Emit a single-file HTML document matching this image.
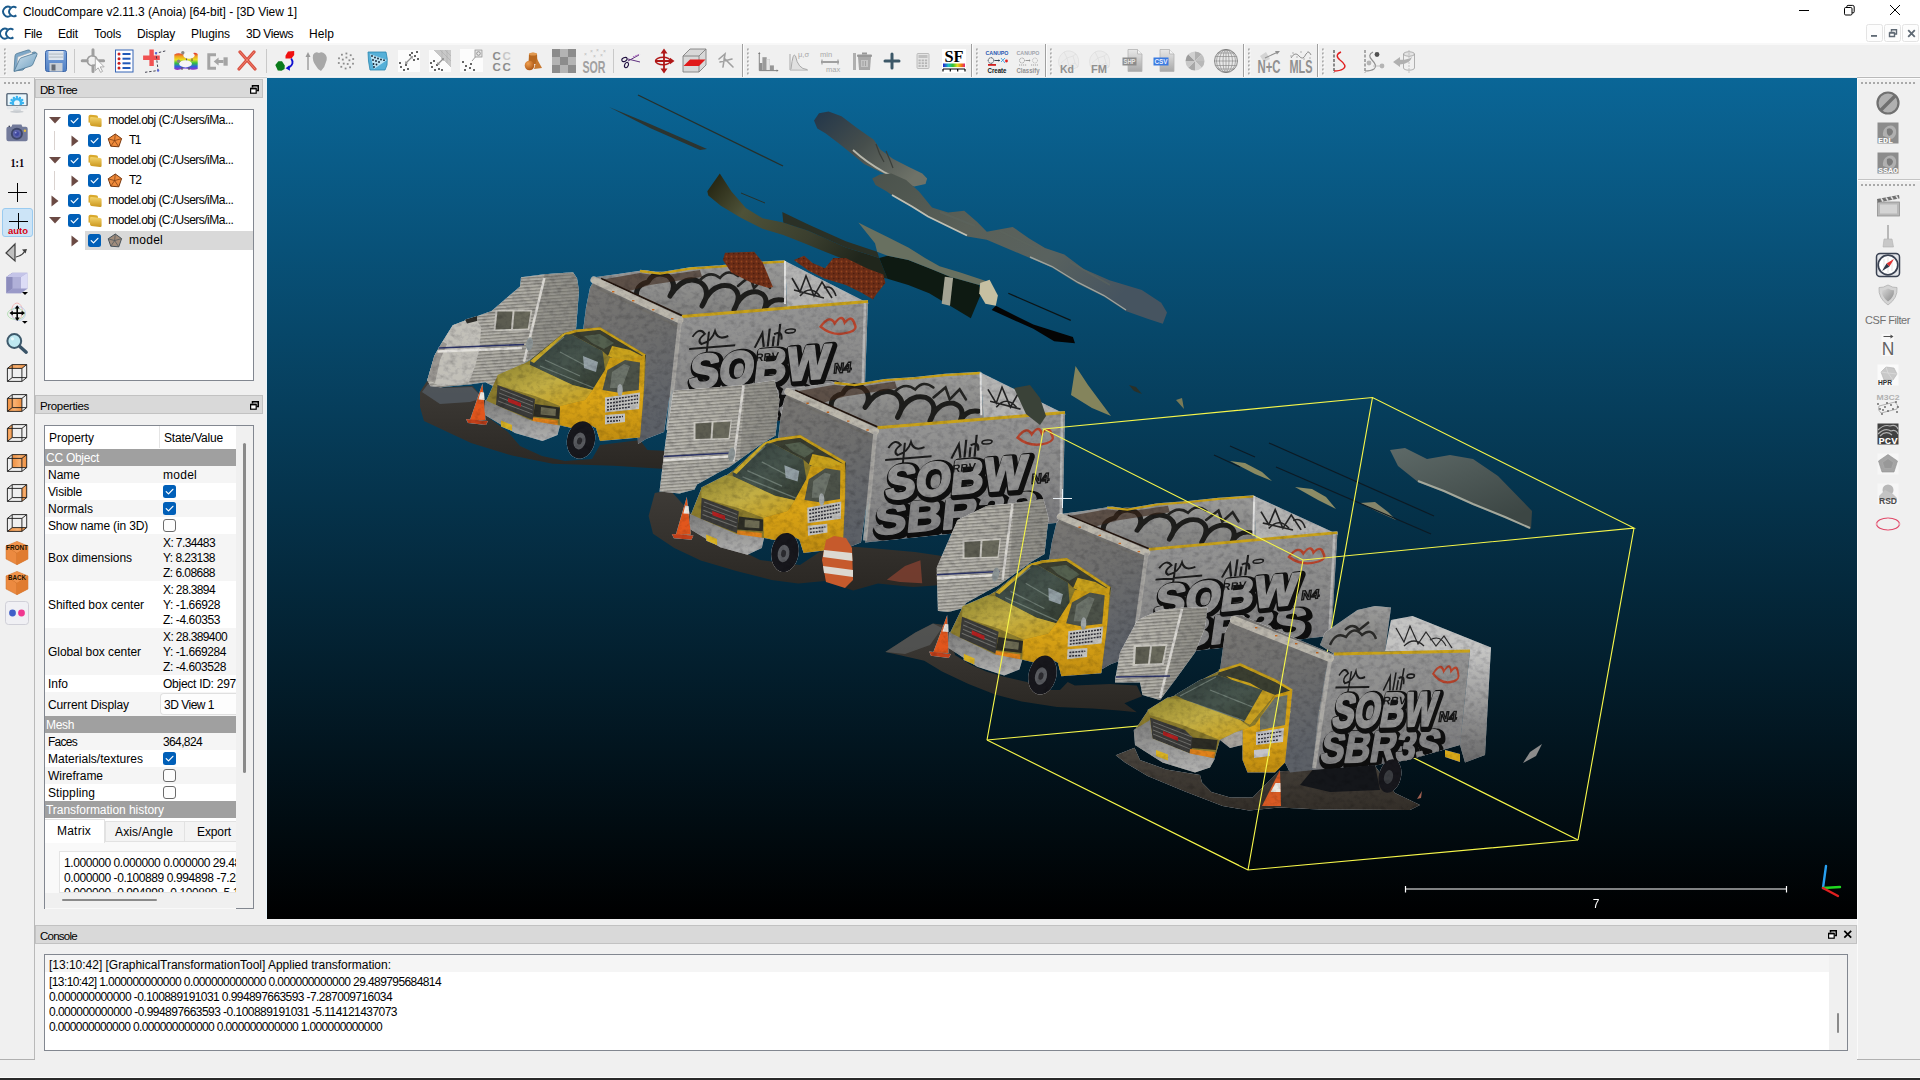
<!DOCTYPE html>
<html><head><meta charset="utf-8"><title>CloudCompare</title>
<style>
*{box-sizing:border-box;margin:0;padding:0}
html,body{width:1920px;height:1080px;overflow:hidden;background:#f0f0f0;font-family:"Liberation Sans",sans-serif;font-size:12px;color:#000}
.a{position:absolute}
.t{position:absolute;white-space:pre;line-height:1.16}
svg{position:absolute;overflow:visible}

</style></head>
<body>
<div class="a" style="left:0px;top:0px;width:1920px;height:44px;background:#fff;"></div>
<div class="a" style="left:0px;top:43px;width:1920px;height:2px;background:#f8f8f8;"></div>
<svg style="left:3px;top:4px" width="15" height="15" viewBox="0 0 15 15"><path d="M7.6 3.4 A4.9 4.9 0 1 0 7.6 11.8" fill="none" stroke="#1a5a8c" stroke-width="1.9"/><path d="M13.4 3.8 A4.6 4.6 0 1 0 13.4 11.4" fill="none" stroke="#1a5a8c" stroke-width="1.9"/></svg>
<div class="t" style="left:23px;top:5.8px;font-size:12px;color:#000;font-weight:normal;letter-spacing:-0.046px;">CloudCompare v2.11.3 (Anoia) [64-bit] - [3D View 1]</div>
<svg style="left:0px;top:26px" width="15" height="15" viewBox="0 0 15 15"><path d="M7.6 3.4 A4.9 4.9 0 1 0 7.6 11.8" fill="none" stroke="#1a5a8c" stroke-width="1.9"/><path d="M13.4 3.8 A4.6 4.6 0 1 0 13.4 11.4" fill="none" stroke="#1a5a8c" stroke-width="1.9"/></svg>
<div class="t" style="left:24px;top:28.3px;font-size:12px;color:#000;font-weight:normal;letter-spacing:-0.336px;">File</div>
<div class="t" style="left:58px;top:28.3px;font-size:12px;color:#000;font-weight:normal;letter-spacing:-0.172px;">Edit</div>
<div class="t" style="left:94px;top:28.3px;font-size:12px;color:#000;font-weight:normal;letter-spacing:-0.203px;">Tools</div>
<div class="t" style="left:137px;top:28.3px;font-size:12px;color:#000;font-weight:normal;letter-spacing:-0.194px;">Display</div>
<div class="t" style="left:191px;top:28.3px;font-size:12px;color:#000;font-weight:normal;letter-spacing:-0.051px;">Plugins</div>
<div class="t" style="left:246px;top:28.3px;font-size:12px;color:#000;font-weight:normal;letter-spacing:-0.434px;">3D Views</div>
<div class="t" style="left:309px;top:28.3px;font-size:12px;color:#000;font-weight:normal;letter-spacing:0.078px;">Help</div>
<svg style="left:1780px;top:0" width="140" height="44" viewBox="0 0 140 44"><path d="M19 10.5 H29" stroke="#000" stroke-width="1"/><rect x="64.5" y="7.5" width="7.5" height="7.5" rx="1.2" fill="none" stroke="#000" stroke-width="1"/><path d="M66.8 7.5 V6.7 A1.3 1.3 0 0 1 68.1 5.4 H72.6 A1.6 1.6 0 0 1 74.2 7 V11.7 A1.2 1.2 0 0 1 73 12.9 H72" fill="none" stroke="#000" stroke-width="1"/><path d="M110 5 L120 15 M120 5 L110 15" stroke="#000" stroke-width="1"/><rect x="86.5" y="24.5" width="16" height="17" rx="2" fill="#fdfdfd" stroke="#e4e4e4"/><rect x="104.5" y="24.5" width="16" height="17" rx="2" fill="#fdfdfd" stroke="#e4e4e4"/><rect x="122.5" y="24.5" width="16" height="17" rx="2" fill="#fdfdfd" stroke="#e4e4e4"/><rect x="91" y="35" width="6" height="1.8" fill="#5f6974"/><path d="M109.5 33 H114.5 V36.5 H109.5 Z M109.5 32.5 H114.5 M111.5 31.5 V29.8 H116.5 V34 H115" fill="none" stroke="#5f6974" stroke-width="1.4"/><path d="M128.2 30.2 L134.8 36.8 M134.8 30.2 L128.2 36.8" stroke="#5f6974" stroke-width="1.8"/></svg>
<div class="a" style="left:0px;top:76px;width:1920px;height:1px;background:#f5f5f5;"></div>
<div class="a" style="left:0px;top:77px;width:267px;height:1px;background:#d0d0d0;"></div>
<div class="a" style="left:267px;top:77px;width:1590px;height:1px;background:#e4eaee;"></div>
<div class="a" style="left:1857px;top:77px;width:63px;height:1px;background:#b9b9b9;"></div>
<div class="a" style="left:1858px;top:78px;width:62px;height:1px;background:#fcfcfc;"></div>
<svg style="left:0;top:44px" width="1920" height="34" viewBox="0 0 1920 34"><defs><linearGradient id="gfold" x1="0" y1="0" x2="1" y2="1"><stop offset="0" stop-color="#cfe2ef"/><stop offset="1" stop-color="#6f9fc0"/></linearGradient><linearGradient id="gsave" x1="0" y1="0" x2="0" y2="1"><stop offset="0" stop-color="#7fa6dc"/><stop offset="1" stop-color="#4f7fc4"/></linearGradient><linearGradient id="grain" x1="0" y1="0" x2="0" y2="1"><stop offset="0" stop-color="#e03030"/><stop offset="0.2" stop-color="#f0a020"/><stop offset="0.4" stop-color="#e8e020"/><stop offset="0.6" stop-color="#30c040"/><stop offset="0.8" stop-color="#3060e0"/><stop offset="1" stop-color="#a030c0"/></linearGradient><linearGradient id="gsf" x1="0" y1="0" x2="1" y2="0"><stop offset="0" stop-color="#2020d0"/><stop offset="0.25" stop-color="#20c0c0"/><stop offset="0.45" stop-color="#30c030"/><stop offset="0.65" stop-color="#e0e020"/><stop offset="0.85" stop-color="#f07010"/><stop offset="1" stop-color="#e02080"/></linearGradient><radialGradient id="gor" cx="0.35" cy="0.3" r="0.8"><stop offset="0" stop-color="#f0a050"/><stop offset="1" stop-color="#a85010"/></radialGradient><linearGradient id="ggrey" x1="0" y1="0" x2="0" y2="1"><stop offset="0" stop-color="#e8e8e8"/><stop offset="1" stop-color="#a8a8a8"/></linearGradient></defs><rect x="4" y="4.5" width="2" height="2" fill="#a9a9a9"/><rect x="5" y="5.5" width="2" height="2" fill="#fafafa" opacity="0.7"/><rect x="4" y="8.5" width="2" height="2" fill="#a9a9a9"/><rect x="5" y="9.5" width="2" height="2" fill="#fafafa" opacity="0.7"/><rect x="4" y="12.5" width="2" height="2" fill="#a9a9a9"/><rect x="5" y="13.5" width="2" height="2" fill="#fafafa" opacity="0.7"/><rect x="4" y="16.5" width="2" height="2" fill="#a9a9a9"/><rect x="5" y="17.5" width="2" height="2" fill="#fafafa" opacity="0.7"/><rect x="4" y="20.5" width="2" height="2" fill="#a9a9a9"/><rect x="5" y="21.5" width="2" height="2" fill="#fafafa" opacity="0.7"/><rect x="4" y="24.5" width="2" height="2" fill="#a9a9a9"/><rect x="5" y="25.5" width="2" height="2" fill="#fafafa" opacity="0.7"/><rect x="4" y="28.5" width="2" height="2" fill="#a9a9a9"/><rect x="5" y="29.5" width="2" height="2" fill="#fafafa" opacity="0.7"/><g transform="translate(25 17)"><path d="M-11 10 L-10 -5 Q-10 -7 -8 -7.5 L3 -11 Q5 -11.5 5.5 -9.5 L6 -8 L9 -9 Q11 -9.5 11 -7.5 L11 -4 L-2 9 Z" fill="#7fa8c8" stroke="#4f7896" stroke-width="0.8"/><path d="M-8 6 L-7 -4 L7 -9 L7 -3 Z" fill="#f4f4f4" stroke="#b8b8b8" stroke-width="0.5"/><path d="M-11 10.5 L-5.5 -1.5 Q-5 -3 -3 -3.5 L10.5 -8 Q12.5 -8.5 12 -6.5 L8 3 Q7.5 4.5 6 5 Z" fill="url(#gfold)" stroke="#4f7896" stroke-width="0.8"/></g><g transform="translate(56 17)"><rect x="-10.5" y="-10.5" width="21" height="21" rx="2" fill="url(#gsave)" stroke="#3c66a8" stroke-width="1"/><rect x="-7.5" y="-10" width="15" height="9" fill="#dfe6ee"/><rect x="-7.5" y="-7.5" width="15" height="1.2" fill="#b8c0c8"/><rect x="-7.5" y="-4.5" width="15" height="1.2" fill="#b8c0c8"/><rect x="-6.5" y="2" width="13" height="8.5" fill="#c9cfd6"/><rect x="-4.5" y="3.5" width="4" height="6" fill="#666c74"/></g><rect x="74" y="5" width="1" height="24" fill="#c9c9c9"/><g transform="translate(93 17)"><circle cx="-0.7" cy="-0.3" r="5" fill="none" stroke="#9c9c9c" stroke-width="1.6"/><path d="M0 -11.3 V-5.8 M0 4.8 V10.6 M-10.8 -0.3 H-5.8 M4.6 -0.3 H10.6" stroke="#9e9e9e" stroke-width="3" stroke-linecap="round"/><path d="M2.3 -3.2 L2.3 9.6 L5.2 6.8 L7.6 11.4 L9.6 10.4 L7.2 5.9 L11.2 5.9 Z" fill="#fbfbfb" stroke="#a6a6a6" stroke-width="0.9"/></g><g transform="translate(124 17)"><rect x="-8.5" y="-11" width="17.5" height="22" fill="#fdfdff" stroke="#3565b5" stroke-width="1"/><circle cx="-5" cy="-7" r="1.5" fill="#c82020"/><rect x="-1.5" y="-8" width="8" height="2" fill="#2058b8"/><circle cx="-5" cy="-2.3" r="1.5" fill="#c82020"/><rect x="-1.5" y="-3.3" width="8" height="2" fill="#2058b8"/><circle cx="-5" cy="2.3" r="1.5" fill="#c82020"/><rect x="-1.5" y="1.2999999999999998" width="8" height="2" fill="#2058b8"/><circle cx="-5" cy="7" r="1.5" fill="#c82020"/><rect x="-1.5" y="6" width="8" height="2" fill="#2058b8"/></g><g transform="translate(152 17)"><path d="M-0.4 -11.6 V5.1 M-8.9 -3.25 H7.75" stroke="#f05252" stroke-width="4.4"/><path d="M-7 11.3 L6.1 9.5 L4 -7.8 L14.4 -10.3" fill="none" stroke="#303040" stroke-width="0.9" stroke-dasharray="2.4 1.8"/><circle cx="4" cy="-7.9" r="1.2" fill="#5868d8"/><circle cx="6.1" cy="9.5" r="1.2" fill="#5868d8"/></g><g transform="translate(186 17)"><path d="M-11.7 -6.5 Q-8 -8.5 -4 -7 Q2 -5 6 -7.5 Q9 -9 11.7 -7 V8 Q8 9.5 4 8.2 Q-2 6.5 -6 8.5 Q-9 9.5 -11.7 8 Z" fill="url(#grain)"/><ellipse cx="3" cy="-5.6" rx="5.6" ry="3.4" fill="#f6f6f6"/><circle cx="-3.2" cy="-8.2" r="1.7" fill="#8a8680"/><path d="M0.5 -2.6 V0 M6 -2.6 V0" stroke="#5a5a5a" stroke-width="1.1"/><ellipse cx="-0.5" cy="2.8" rx="6.4" ry="3.6" fill="#f6f6f6"/><circle cx="-7.4" cy="0.2" r="1.7" fill="#8a8680"/><path d="M-4 6 V9 M3 6 V9" stroke="#5a5a5a" stroke-width="1.1"/></g><g transform="translate(217 17)"><path d="M-1 -6.3 H-8.2 V7.3 H-1" fill="none" stroke="#a4a4a4" stroke-width="3"/><path d="M-3.3 0.5 L1.6 -3.6 V-1 H6.5 V2 H1.6 V4.6 Z" fill="#a4a4a4"/><rect x="6.5" y="-3.7" width="4.2" height="8.4" fill="#a4a4a4"/></g><g transform="translate(247 17)"><path d="M-7 -9 L8 8 M7 -9 L-8 8" stroke="#d85040" stroke-width="3.2" stroke-linecap="round"/><path d="M-7 -9 L8 8 M7 -9 L-8 8" stroke="#f08070" stroke-width="1" stroke-linecap="round"/></g><rect x="266" y="5" width="1" height="24" fill="#c9c9c9"/><g transform="translate(285 17)"><path d="M0.5 -5.2 L3 -9.6 L9.2 -9.9 L9.2 -6 L6.5 -2.4 L0.5 -2.4 Z" fill="#f01010"/><path d="M-9.7 4 L-6.6 0.2 L-3 0.2 L-0.2 4.4 L-0.4 8 L-3.5 9.8 L-7.2 9.6 Z" fill="#0a7a1a"/><path d="M6.2 -2.4 Q10 2.5 3.5 7" fill="none" stroke="#1010d0" stroke-width="1.8"/><path d="M0.6 7.2 L4.4 4.2 L5 9.8 Z" fill="#1010d0"/></g><g transform="translate(316 17)"><path d="M-8 9 V-6" stroke="#9a9a9a" stroke-width="1.4"/><path d="M-10.5 -4 L-8 -9 L-5.5 -4 Z" fill="#9a9a9a"/><path d="M-3 -6 Q-1 -10 3 -8 Q6 -10 9 -7 Q12 -4 10 1 Q9 6 5 10 Q2 9 0 5 Q-4 0 -3 -6 Z" fill="#a8a8a8"/></g><g transform="translate(346 17)"><rect x="-5.6" y="4.9" width="1.8" height="1.8" fill="#8c8c8c"/><rect x="-8.1" y="1.1" width="1.8" height="1.8" fill="#8c8c8c"/><rect x="-7.9" y="-3.6" width="1.8" height="1.8" fill="#8c8c8c"/><rect x="-5.0" y="-7.2" width="1.8" height="1.8" fill="#8c8c8c"/><rect x="-0.5" y="-8.4" width="1.8" height="1.8" fill="#8c8c8c"/><rect x="3.8" y="-6.7" width="1.8" height="1.8" fill="#8c8c8c"/><rect x="6.3" y="-2.9" width="1.8" height="1.8" fill="#8c8c8c"/><rect x="6.1" y="1.8" width="1.8" height="1.8" fill="#8c8c8c"/><rect x="3.2" y="5.4" width="1.8" height="1.8" fill="#8c8c8c"/><rect x="-1.3" y="6.6" width="1.8" height="1.8" fill="#8c8c8c"/><rect x="0.8" y="2.1" width="1.8" height="1.8" fill="#8c8c8c"/><rect x="-3.2" y="1.7" width="1.8" height="1.8" fill="#8c8c8c"/><rect x="-4.1" y="-2.3" width="1.8" height="1.8" fill="#8c8c8c"/><rect x="-0.5" y="-4.4" width="1.8" height="1.8" fill="#8c8c8c"/><rect x="2.5" y="-1.6" width="1.8" height="1.8" fill="#8c8c8c"/></g><g transform="translate(378 17)"><path d="M-10 -9 L8 -9 Q10 -2 9 4 L7 9 L-8 9 Q-10 0 -10 -9 Z" fill="#56b0d8" stroke="#2a86b0" stroke-width="0.8"/><path d="M-8 -7 L9 -1 L-4 8 Z" fill="#bfe4f4"/><circle cx="-6" cy="-5" r="0.9" fill="#102030"/><circle cx="-3" cy="-3.5" r="0.9" fill="#102030"/><circle cx="0" cy="-2.5" r="0.9" fill="#102030"/><circle cx="3" cy="-1.5" r="0.9" fill="#102030"/><circle cx="6" cy="-0.8" r="0.9" fill="#102030"/><circle cx="-5" cy="-1" r="0.9" fill="#102030"/><circle cx="-2" cy="0" r="0.9" fill="#102030"/><circle cx="1" cy="1" r="0.9" fill="#102030"/><circle cx="-4.5" cy="3" r="0.9" fill="#102030"/><circle cx="-1.5" cy="3.5" r="0.9" fill="#102030"/><circle cx="-4" cy="6" r="0.9" fill="#102030"/></g><g transform="translate(409 17)"><rect x="-11" y="-11" width="22" height="22" fill="#fcfcfc"/><rect x="-8.9" y="5.1" width="1.8" height="1.8" fill="#404040"/><rect x="-5.9" y="8.1" width="1.8" height="1.8" fill="#404040"/><rect x="-3.9" y="3.1" width="1.8" height="1.8" fill="#404040"/><rect x="-1.9" y="7.1" width="1.8" height="1.8" fill="#404040"/><rect x="-9.9" y="1.1" width="1.8" height="1.8" fill="#404040"/><rect x="2.1" y="-8.9" width="1.8" height="1.8" fill="#404040"/><rect x="5.1" y="-5.9" width="1.8" height="1.8" fill="#404040"/><rect x="7.1" y="-9.9" width="1.8" height="1.8" fill="#404040"/><rect x="8.1" y="-2.9" width="1.8" height="1.8" fill="#404040"/><rect x="4.1" y="-1.9" width="1.8" height="1.8" fill="#404040"/><rect x="0.09999999999999998" y="-6.9" width="1.8" height="1.8" fill="#404040"/><path d="M-3 2 L3 -4" stroke="#909090" stroke-width="1.2"/><path d="M-4 3 L-1 2.5 L-3.5 0 Z M4 -5 L1 -4.5 L3.5 -2 Z" fill="#909090"/></g><g transform="translate(440 17)"><rect x="-11" y="-11" width="22" height="22" fill="#fcfcfc"/><path d="M-6 -11 H11 V6 Z" fill="#c8c8c8"/><path d="M0 -11 L11 0 M5 -11 L11 -5 M-6 -11 L11 6 M2 -11 V-3 M7 -11 V2" stroke="#a8a8a8" stroke-width="0.5"/><rect x="-8.9" y="5.1" width="1.8" height="1.8" fill="#404040"/><rect x="-5.9" y="8.1" width="1.8" height="1.8" fill="#404040"/><rect x="-3.9" y="3.1" width="1.8" height="1.8" fill="#404040"/><rect x="-1.9" y="7.1" width="1.8" height="1.8" fill="#404040"/><rect x="-9.9" y="1.1" width="1.8" height="1.8" fill="#404040"/><rect x="-6.9" y="-0.9" width="1.8" height="1.8" fill="#404040"/><rect x="1.1" y="8.1" width="1.8" height="1.8" fill="#404040"/><path d="M-2 3 L3 -2" stroke="#909090" stroke-width="1.2"/><path d="M-3 4 L0 3.5 L-2.5 1 Z M4 -3 L1 -2.5 L3.5 0 Z" fill="#909090"/></g><g transform="translate(471 17)"><rect x="-11" y="-12" width="23" height="23" fill="#fcfcfc"/><rect x="-8.9" y="0.09999999999999998" width="1.8" height="1.8" fill="#404040"/><rect x="-5.9" y="4.1" width="1.8" height="1.8" fill="#404040"/><rect x="-6.9" y="8.1" width="1.8" height="1.8" fill="#404040"/><rect x="-1.9" y="6.1" width="1.8" height="1.8" fill="#404040"/><rect x="2.1" y="8.1" width="1.8" height="1.8" fill="#404040"/><rect x="-0.9" y="2.1" width="1.8" height="1.8" fill="#404040"/><path d="M1 0 L6 -6" stroke="#a0a0a0" stroke-width="1"/><rect x="4" y="-11" width="7" height="7" fill="#e8e8e8" stroke="#909090" stroke-width="0.8"/><circle cx="7.5" cy="-7.5" r="1.8" fill="none" stroke="#808080" stroke-width="0.8"/></g><g transform="translate(502 17)"><text x="-9.5" y="-1" font-family="Liberation Sans" font-weight="bold" font-size="11.5" fill="#8c8c8c">C</text><text x="0.5" y="-1" font-family="Liberation Sans" font-weight="bold" font-size="11.5" fill="#c8c8c8">C</text><text x="-9.5" y="10" font-family="Liberation Sans" font-weight="bold" font-size="11.5" fill="#8c8c8c">C</text><text x="0.5" y="10" font-family="Liberation Sans" font-weight="bold" font-size="11.5" fill="#8c8c8c">C</text></g><g transform="translate(533 17)"><path d="M-4 -7 Q0 -9.5 4 -7 L4.5 3 L-4.5 3 Z" fill="#b86820"/><ellipse cx="0" cy="-7" rx="4" ry="1.6" fill="#e09850"/><path d="M4 -2 L9 7 L1 8 Z" fill="#c87830"/><circle cx="-3.5" cy="4.5" r="4.8" fill="url(#gor)"/></g><g transform="translate(564 17)"><rect x="-12" y="-12" width="8" height="8" fill="#8c8c8c"/><rect x="-12" y="-4" width="8" height="8" fill="#b4b4b4"/><rect x="-12" y="4" width="8" height="8" fill="#8c8c8c"/><rect x="-4" y="-12" width="8" height="8" fill="#b4b4b4"/><rect x="-4" y="-4" width="8" height="8" fill="#8c8c8c"/><rect x="-4" y="4" width="8" height="8" fill="#b4b4b4"/><rect x="4" y="-12" width="8" height="8" fill="#8c8c8c"/><rect x="4" y="-4" width="8" height="8" fill="#b4b4b4"/><rect x="4" y="4" width="8" height="8" fill="#8c8c8c"/></g><g transform="translate(594 17)"><text x="-11.5" y="11.5" font-family="Liberation Sans" font-weight="bold" font-size="17" textLength="23" lengthAdjust="spacingAndGlyphs" fill="#a0a0a0">SOR</text><text x="-10" y="-5" font-family="Liberation Sans" font-size="5" fill="#b8b8b8">×</text><text x="-4" y="-8" font-family="Liberation Sans" font-size="5" fill="#b8b8b8">×</text><text x="2" y="-9" font-family="Liberation Sans" font-size="5" fill="#b8b8b8">×</text><text x="6" y="-4" font-family="Liberation Sans" font-size="5" fill="#b8b8b8">×</text><text x="9" y="-8" font-family="Liberation Sans" font-size="5" fill="#b8b8b8">×</text><text x="-1" y="-3" font-family="Liberation Sans" font-size="5" fill="#b8b8b8">×</text></g><rect x="613" y="5" width="1" height="24" fill="#c9c9c9"/><g transform="translate(631 17)"><path d="M-3 0 L8 -6 M-3 -2 L9 1" stroke="#603080" stroke-width="1"/><path d="M2 -4 L9 -7" stroke="#b070c0" stroke-width="1.2" stroke-dasharray="1.5 1"/><ellipse cx="-6.5" cy="-1.5" rx="2.8" ry="1.8" fill="none" stroke="#201040" stroke-width="1.1" transform="rotate(-25 -6.5 -1.5)"/><ellipse cx="-4.5" cy="4" rx="1.8" ry="2.8" fill="none" stroke="#201040" stroke-width="1.1" transform="rotate(25 -4.5 4)"/></g><g transform="translate(664 17)"><path d="M0 -10 V10 M-9 0 H9" stroke="#b01818" stroke-width="1.8"/><path d="M0 -12.5 L-3.5 -7.5 H3.5 Z M0 12.5 L-3.5 7.5 H3.5 Z M10.5 0 L6 -3.2 V3.2 Z" fill="#b01818"/><ellipse cx="-1" cy="0" rx="7.5" ry="3.8" fill="none" stroke="#b01818" stroke-width="1.5"/></g><g transform="translate(694 17)"><path d="M-11 -5 L-4 -12 H12 V4 L5 11 H-11 Z" fill="#d8d8d8" stroke="#808080" stroke-width="0.9"/><path d="M-11 -5 H5 L12 -12 M5 -5 V11" fill="none" stroke="#808080" stroke-width="0.9"/><path d="M-10.5 5 L-4 -1.5 H11.5 L5 5 Z" fill="#e01818"/></g><g transform="translate(726 17)"><path d="M-7 -2 L-1 -7 L-3 6 M-6 1 L6 -2 M-2 -3 L7 6" fill="none" stroke="#a0a0a0" stroke-width="1.6" stroke-linecap="round"/></g><rect x="742" y="0" width="1" height="33" fill="#a0a0a0"/><rect x="743" y="0" width="1" height="33" fill="#fdfdfd"/><rect x="747" y="4.5" width="2" height="2" fill="#a9a9a9"/><rect x="748" y="5.5" width="2" height="2" fill="#fafafa" opacity="0.7"/><rect x="747" y="8.5" width="2" height="2" fill="#a9a9a9"/><rect x="748" y="9.5" width="2" height="2" fill="#fafafa" opacity="0.7"/><rect x="747" y="12.5" width="2" height="2" fill="#a9a9a9"/><rect x="748" y="13.5" width="2" height="2" fill="#fafafa" opacity="0.7"/><rect x="747" y="16.5" width="2" height="2" fill="#a9a9a9"/><rect x="748" y="17.5" width="2" height="2" fill="#fafafa" opacity="0.7"/><rect x="747" y="20.5" width="2" height="2" fill="#a9a9a9"/><rect x="748" y="21.5" width="2" height="2" fill="#fafafa" opacity="0.7"/><rect x="747" y="24.5" width="2" height="2" fill="#a9a9a9"/><rect x="748" y="25.5" width="2" height="2" fill="#fafafa" opacity="0.7"/><rect x="747" y="28.5" width="2" height="2" fill="#a9a9a9"/><rect x="748" y="29.5" width="2" height="2" fill="#fafafa" opacity="0.7"/><g transform="translate(768 17)"><rect x="-8.4" y="2" width="2.8" height="7.2" fill="#8e8e8e"/><rect x="-5.6" y="-3.8" width="4.3" height="13" fill="#9a9a9a"/><rect x="-1.3" y="-1.7" width="3.1" height="10.9" fill="#e6e6e6" stroke="#c4c4c4" stroke-width="0.4"/><rect x="2" y="4.4" width="3.9" height="4.8" fill="#969696"/><path d="M-8.7 -8 V9.6 H9.6" fill="none" stroke="#787878" stroke-width="0.9"/><path d="M-8.7 -9 L-9.9 -7 H-7.5 Z M10.6 9.6 L8.6 8.4 V10.8 Z" fill="#787878"/></g><g transform="translate(799 17)"><path d="M-9 -7 V9 H9" fill="none" stroke="#a8a8a8" stroke-width="1"/><path d="M-8 8 Q-6 -10 -3.5 -5 Q-1 8 8 8.5" fill="#e0e0e0" stroke="#a8a8a8" stroke-width="1"/><text x="-1" y="-4" font-family="Liberation Sans" font-size="7.5" fill="#a8a8a8">μ,σ</text></g><g transform="translate(830 17)"><text x="-10" y="-4" font-family="Liberation Sans" font-size="7.5" fill="#a8a8a8">min</text><text x="-4" y="11" font-family="Liberation Sans" font-size="7.5" fill="#a8a8a8">max</text><path d="M-9 1 H9" stroke="#a0a0a0" stroke-width="2"/><path d="M-8 -1.5 V3.5 M8 -1.5 V3.5" stroke="#a0a0a0" stroke-width="1.2"/></g><g transform="translate(862 17)"><rect x="-9" y="-8" width="3" height="17" fill="#b0b0b0"/><path d="M-4 -4 H9 L8 9 H-3 Z" fill="#a8a8a8"/><rect x="-5" y="-6.5" width="15" height="2.5" rx="1" fill="#989898"/><rect x="0" y="-8.5" width="5" height="2" fill="#989898"/><rect x="-1" y="-1" width="7" height="7" fill="#c4c4c4"/><path d="M1 0 V5 M3.5 0 V5" stroke="#989898" stroke-width="0.8"/></g><g transform="translate(892 17)"><path d="M0 -7 V7 M-7 0 H7" stroke="#3c5868" stroke-width="3" stroke-linecap="round"/></g><g transform="translate(923 17)"><rect x="-6" y="-7.5" width="12" height="15" rx="1" fill="#e4e4e4" stroke="#b0b0b0" stroke-width="0.8"/><rect x="-4.5" y="-6" width="9" height="3" fill="#c0c0c0"/><rect x="-4.5" y="-1.5" width="2.2" height="1.8" fill="#b4b4b4"/><rect x="-4.5" y="1.2999999999999998" width="2.2" height="1.8" fill="#b4b4b4"/><rect x="-4.5" y="4.1" width="2.2" height="1.8" fill="#b4b4b4"/><rect x="-1.2999999999999998" y="-1.5" width="2.2" height="1.8" fill="#b4b4b4"/><rect x="-1.2999999999999998" y="1.2999999999999998" width="2.2" height="1.8" fill="#b4b4b4"/><rect x="-1.2999999999999998" y="4.1" width="2.2" height="1.8" fill="#b4b4b4"/><rect x="1.9000000000000004" y="-1.5" width="2.2" height="1.8" fill="#b4b4b4"/><rect x="1.9000000000000004" y="1.2999999999999998" width="2.2" height="1.8" fill="#b4b4b4"/><rect x="1.9000000000000004" y="4.1" width="2.2" height="1.8" fill="#b4b4b4"/></g><g transform="translate(954 17)"><rect x="-12" y="-12" width="24" height="24" fill="#fff"/><text x="-9.5" y="0.5" font-family="Liberation Serif" font-weight="bold" font-size="16" textLength="19" lengthAdjust="spacingAndGlyphs" fill="#000">SF</text><rect x="-11" y="2.5" width="22" height="3.6" fill="url(#gsf)"/><path d="M-11 8 H11 M-11 8 V10.5 M-3.7 8 V10.5 M3.7 8 V10.5 M11 8 V10.5" stroke="#000" stroke-width="1.2" fill="none"/></g><rect x="971" y="0" width="1" height="33" fill="#a0a0a0"/><rect x="972" y="0" width="1" height="33" fill="#fdfdfd"/><rect x="976" y="4.5" width="2" height="2" fill="#a9a9a9"/><rect x="977" y="5.5" width="2" height="2" fill="#fafafa" opacity="0.7"/><rect x="976" y="8.5" width="2" height="2" fill="#a9a9a9"/><rect x="977" y="9.5" width="2" height="2" fill="#fafafa" opacity="0.7"/><rect x="976" y="12.5" width="2" height="2" fill="#a9a9a9"/><rect x="977" y="13.5" width="2" height="2" fill="#fafafa" opacity="0.7"/><rect x="976" y="16.5" width="2" height="2" fill="#a9a9a9"/><rect x="977" y="17.5" width="2" height="2" fill="#fafafa" opacity="0.7"/><rect x="976" y="20.5" width="2" height="2" fill="#a9a9a9"/><rect x="977" y="21.5" width="2" height="2" fill="#fafafa" opacity="0.7"/><rect x="976" y="24.5" width="2" height="2" fill="#a9a9a9"/><rect x="977" y="25.5" width="2" height="2" fill="#fafafa" opacity="0.7"/><rect x="976" y="28.5" width="2" height="2" fill="#a9a9a9"/><rect x="977" y="29.5" width="2" height="2" fill="#fafafa" opacity="0.7"/><g transform="translate(997 17)"><text x="-11.5" y="-6.5" font-family="Liberation Sans" font-weight="bold" font-size="6.2" textLength="23" lengthAdjust="spacingAndGlyphs" fill="#2858b0">CANUPO</text><circle cx="-6" cy="-0.5" r="2.8" fill="none" stroke="#203040" stroke-width="1" stroke-dasharray="1 0.6"/><path d="M-2.5 -0.5 H2.5" stroke="#203040" stroke-width="0.9"/><path d="M3 -0.5 L1.5 -1.8 V0.8 Z" fill="#203040"/><path d="M4 -3 L8 2 M8 -3 L4 1" stroke="#40a0e0" stroke-width="0.9"/><circle cx="9.5" cy="0" r="1.4" fill="#e02020"/><rect x="-9" y="3" width="8" height="1.8" fill="#d02020"/><text x="-9.5" y="11.5" font-family="Liberation Sans" font-weight="bold" font-size="7" textLength="19" lengthAdjust="spacingAndGlyphs" fill="#101820">Create</text></g><g transform="translate(1028 17)"><text x="-11.5" y="-6.5" font-family="Liberation Sans" font-weight="bold" font-size="6.2" textLength="23" lengthAdjust="spacingAndGlyphs" fill="#a0a4ac">CANUPO</text><circle cx="-6" cy="-0.5" r="2.5" fill="none" stroke="#909090" stroke-width="0.9" stroke-dasharray="1 0.6"/><path d="M-2.5 -0.5 H1.5" stroke="#909090" stroke-width="0.9"/><path d="M2.5 -0.5 L1 -1.8 V0.8 Z" fill="#909090"/><circle cx="7" cy="-0.5" r="2.5" fill="none" stroke="#b0b0b0" stroke-width="0.9" stroke-dasharray="1 0.6"/><path d="M-9 4 H-1 M3 4 H10" stroke="#a0a0a0" stroke-width="1" stroke-dasharray="1.2 0.8"/><text x="-11.5" y="11.5" font-family="Liberation Sans" font-weight="bold" font-size="7" textLength="23" lengthAdjust="spacingAndGlyphs" fill="#909090">Classify</text></g><rect x="1045" y="0" width="1" height="33" fill="#a0a0a0"/><rect x="1046" y="0" width="1" height="33" fill="#fdfdfd"/><rect x="1050" y="4.5" width="2" height="2" fill="#a9a9a9"/><rect x="1051" y="5.5" width="2" height="2" fill="#fafafa" opacity="0.7"/><rect x="1050" y="8.5" width="2" height="2" fill="#a9a9a9"/><rect x="1051" y="9.5" width="2" height="2" fill="#fafafa" opacity="0.7"/><rect x="1050" y="12.5" width="2" height="2" fill="#a9a9a9"/><rect x="1051" y="13.5" width="2" height="2" fill="#fafafa" opacity="0.7"/><rect x="1050" y="16.5" width="2" height="2" fill="#a9a9a9"/><rect x="1051" y="17.5" width="2" height="2" fill="#fafafa" opacity="0.7"/><rect x="1050" y="20.5" width="2" height="2" fill="#a9a9a9"/><rect x="1051" y="21.5" width="2" height="2" fill="#fafafa" opacity="0.7"/><rect x="1050" y="24.5" width="2" height="2" fill="#a9a9a9"/><rect x="1051" y="25.5" width="2" height="2" fill="#fafafa" opacity="0.7"/><rect x="1050" y="28.5" width="2" height="2" fill="#a9a9a9"/><rect x="1051" y="29.5" width="2" height="2" fill="#fafafa" opacity="0.7"/><g transform="translate(1068 17)"><path d="M-9 4 Q-11 -4 -4 -9 Q2 -12 8 -7 Q12 -2 10 6 Q4 10 -2 8 Q-8 8 -9 4 Z" fill="#ececec" stroke="#dcdcdc" stroke-width="0.7"/><path d="M-4 -9 L-1 -3 L-7 2 M-1 -3 L5 -5 L8 -7 M5 -5 L7 2 L1 5 L-1 -3 M7 2 L10 6" fill="none" stroke="#dadada" stroke-width="0.6"/><text x="-8" y="11.5" font-family="Liberation Sans" font-weight="bold" font-size="10.5" fill="#909090">Kd</text></g><g transform="translate(1099 17)"><path d="M-9 4 Q-11 -4 -4 -9 Q2 -12 8 -7 Q12 -2 10 6 Q4 10 -2 8 Q-8 8 -9 4 Z" fill="#ececec" stroke="#dcdcdc" stroke-width="0.7"/><path d="M-4 -9 L-1 -3 L-7 2 M-1 -3 L5 -5 L8 -7 M5 -5 L7 2 L1 5 L-1 -3 M7 2 L10 6" fill="none" stroke="#dadada" stroke-width="0.6"/><text x="-8" y="11.5" font-family="Liberation Sans" font-weight="bold" font-size="10.5" textLength="16" lengthAdjust="spacingAndGlyphs" fill="#909090">FM</text></g><g transform="translate(1132 17)"><path d="M-4 -11.5 H5.5 L10 -7 V10.5 H-4 Z" fill="url(#ggrey)" stroke="#b4b4b4" stroke-width="0.8"/><path d="M5.5 -11.5 V-7 H10" fill="#f4f4f4" stroke="#b4b4b4" stroke-width="0.8"/><rect x="-9.5" y="-3.5" width="14" height="8" fill="#8c8c8c"/><text x="-8.5" y="3" font-family="Liberation Sans" font-weight="bold" font-size="6.5" textLength="12" lengthAdjust="spacingAndGlyphs" fill="#e4e4e4">SHP</text></g><g transform="translate(1164 17)"><path d="M-4 -11.5 H5.5 L10 -7 V10.5 H-4 Z" fill="url(#ggrey)" stroke="#b4b4b4" stroke-width="0.8"/><path d="M5.5 -11.5 V-7 H10" fill="#f4f4f4" stroke="#b4b4b4" stroke-width="0.8"/><rect x="-10.5" y="-3.5" width="15" height="8" fill="#3a7ae0"/><text x="-9.5" y="3" font-family="Liberation Sans" font-weight="bold" font-size="6.5" textLength="13" lengthAdjust="spacingAndGlyphs" fill="#e8f0ff">CSV</text></g><g transform="translate(1195 17)"><path d="M0 0 L9.50 0.00 A9.5 9.5 0 0 1 6.72 6.72 Z" fill="#b8b8b8"/><path d="M0 0 L6.72 6.72 A9.5 9.5 0 0 1 0.00 9.50 Z" fill="#d4d4d4"/><path d="M0 0 L0.00 9.50 A9.5 9.5 0 0 1 -6.72 6.72 Z" fill="#a8a8a8"/><path d="M0 0 L-6.72 6.72 A9.5 9.5 0 0 1 -9.50 0.00 Z" fill="#c8c8c8"/><path d="M0 0 L-9.50 0.00 A9.5 9.5 0 0 1 -6.72 -6.72 Z" fill="#9c9c9c"/><path d="M0 0 L-6.72 -6.72 A9.5 9.5 0 0 1 -0.00 -9.50 Z" fill="#d0d0d0"/><path d="M0 0 L-0.00 -9.50 A9.5 9.5 0 0 1 6.72 -6.72 Z" fill="#b0b0b0"/><path d="M0 0 L6.72 -6.72 A9.5 9.5 0 0 1 9.50 -0.00 Z" fill="#c0c0c0"/></g><g transform="translate(1226 17)"><circle r="11.5" fill="#e8e8e8" stroke="#808080" stroke-width="0.9"/><ellipse rx="3" ry="11.5" fill="none" stroke="#808080" stroke-width="0.6"/><ellipse rx="6.5" ry="11.5" fill="none" stroke="#808080" stroke-width="0.6"/><ellipse rx="9.5" ry="11.5" fill="none" stroke="#808080" stroke-width="0.6"/><path d="M-8.3 -8 H8.3" stroke="#808080" stroke-width="0.6"/><path d="M-10.6 -4.5 H10.6" stroke="#808080" stroke-width="0.6"/><path d="M-11.5 0 H11.5" stroke="#808080" stroke-width="0.6"/><path d="M-10.6 4.5 H10.6" stroke="#808080" stroke-width="0.6"/><path d="M-8.3 8 H8.3" stroke="#808080" stroke-width="0.6"/><path d="M0 -11.5 V11.5" stroke="#808080" stroke-width="0.6"/></g><rect x="1243" y="0" width="1" height="33" fill="#a0a0a0"/><rect x="1244" y="0" width="1" height="33" fill="#fdfdfd"/><rect x="1248" y="4.5" width="2" height="2" fill="#a9a9a9"/><rect x="1249" y="5.5" width="2" height="2" fill="#fafafa" opacity="0.7"/><rect x="1248" y="8.5" width="2" height="2" fill="#a9a9a9"/><rect x="1249" y="9.5" width="2" height="2" fill="#fafafa" opacity="0.7"/><rect x="1248" y="12.5" width="2" height="2" fill="#a9a9a9"/><rect x="1249" y="13.5" width="2" height="2" fill="#fafafa" opacity="0.7"/><rect x="1248" y="16.5" width="2" height="2" fill="#a9a9a9"/><rect x="1249" y="17.5" width="2" height="2" fill="#fafafa" opacity="0.7"/><rect x="1248" y="20.5" width="2" height="2" fill="#a9a9a9"/><rect x="1249" y="21.5" width="2" height="2" fill="#fafafa" opacity="0.7"/><rect x="1248" y="24.5" width="2" height="2" fill="#a9a9a9"/><rect x="1249" y="25.5" width="2" height="2" fill="#fafafa" opacity="0.7"/><rect x="1248" y="28.5" width="2" height="2" fill="#a9a9a9"/><rect x="1249" y="29.5" width="2" height="2" fill="#fafafa" opacity="0.7"/><g transform="translate(1269 17)"><path d="M-9 -5 L-3 -9 L1 -2 L-5 1 Z" fill="#d4d4d4"/><path d="M-4 -3 L9 -9" stroke="#909090" stroke-width="1.1"/><path d="M11 -10 L6 -10 L8 -6.5 Z" fill="#909090"/><text x="-11.5" y="11.5" font-family="Liberation Sans" font-weight="bold" font-size="18" textLength="23" lengthAdjust="spacingAndGlyphs" fill="#909090">N+C</text></g><g transform="translate(1301 17)"><path d="M-10 -3 Q-6 -10 -2 -5 Q2 0 5 -7 Q8 -11 10 -6" fill="none" stroke="#909090" stroke-width="1"/><circle cx="-8" cy="-8" r="0.8" fill="#a8a8a8"/><circle cx="-4" cy="-4" r="0.8" fill="#a8a8a8"/><circle cx="0" cy="-9" r="0.8" fill="#a8a8a8"/><circle cx="3" cy="-2" r="0.8" fill="#a8a8a8"/><circle cx="7" cy="-9" r="0.8" fill="#a8a8a8"/><circle cx="9" cy="-3" r="0.8" fill="#a8a8a8"/><circle cx="-10" cy="-5" r="0.8" fill="#a8a8a8"/><text x="-11.5" y="11.5" font-family="Liberation Sans" font-weight="bold" font-size="18" textLength="23" lengthAdjust="spacingAndGlyphs" fill="#909090">MLS</text></g><rect x="1317" y="0" width="1" height="33" fill="#a0a0a0"/><rect x="1318" y="0" width="1" height="33" fill="#fdfdfd"/><rect x="1322" y="4.5" width="2" height="2" fill="#a9a9a9"/><rect x="1323" y="5.5" width="2" height="2" fill="#fafafa" opacity="0.7"/><rect x="1322" y="8.5" width="2" height="2" fill="#a9a9a9"/><rect x="1323" y="9.5" width="2" height="2" fill="#fafafa" opacity="0.7"/><rect x="1322" y="12.5" width="2" height="2" fill="#a9a9a9"/><rect x="1323" y="13.5" width="2" height="2" fill="#fafafa" opacity="0.7"/><rect x="1322" y="16.5" width="2" height="2" fill="#a9a9a9"/><rect x="1323" y="17.5" width="2" height="2" fill="#fafafa" opacity="0.7"/><rect x="1322" y="20.5" width="2" height="2" fill="#a9a9a9"/><rect x="1323" y="21.5" width="2" height="2" fill="#fafafa" opacity="0.7"/><rect x="1322" y="24.5" width="2" height="2" fill="#a9a9a9"/><rect x="1323" y="25.5" width="2" height="2" fill="#fafafa" opacity="0.7"/><rect x="1322" y="28.5" width="2" height="2" fill="#a9a9a9"/><rect x="1323" y="29.5" width="2" height="2" fill="#fafafa" opacity="0.7"/><g transform="translate(1340 17)"><path d="M-6 -11 V12" stroke="#202020" stroke-width="1" stroke-dasharray="3 1.5"/><path d="M1 -9 Q-6 -6 0 -1 Q8 5 3 8 Q0 10 -6 10" fill="none" stroke="#e02020" stroke-width="1.4"/></g><g transform="translate(1374 17)"><path d="M-9 -11 V12" stroke="#606060" stroke-width="1" stroke-dasharray="3 1.5"/><path d="M-1 -9 Q-7 -6 -2 -1 Q4 5 0 8 Q-3 10 -9 10" fill="none" stroke="#909090" stroke-width="1.2"/><circle cx="3" cy="-6.5" r="2.4" fill="#505050"/><circle cx="-5" cy="2" r="2.4" fill="#b4b4b4"/><circle cx="8" cy="5" r="2.4" fill="#b4b4b4"/><path d="M-1 5 H6" stroke="#b4b4b4" stroke-width="0.8"/></g><g transform="translate(1405 17)"><ellipse cx="4" cy="-7" rx="5.5" ry="2.2" fill="#e4e4e4" stroke="#a0a0a0" stroke-width="0.8"/><path d="M-1.5 -7 V7 A5.5 2.2 0 0 0 9.5 7 V-7" fill="none" stroke="#a0a0a0" stroke-width="0.8"/><path d="M4 -11 V12" stroke="#b0b0b0" stroke-width="0.7" stroke-dasharray="2 1"/><path d="M-12 1 L-5 -4 V-1.2 Q3 -1 7 -4 Q5 3 -5 3.5 V6 Z" fill="#b0b0b0"/></g></svg>
<div class="a" style="left:34px;top:78px;width:1px;height:982px;background:#b9b9b9;"></div>
<div class="a" style="left:0px;top:1059px;width:35px;height:1px;background:#b0b0b0;"></div>
<svg style="left:0;top:78px" width="34" height="560" viewBox="0 78 34 560"><defs><linearGradient id="gcube" x1="0" y1="0" x2="1" y2="1"><stop offset="0" stop-color="#c8c8e4"/><stop offset="1" stop-color="#8080b8"/></linearGradient><linearGradient id="gor2" x1="0" y1="0" x2="1" y2="0"><stop offset="0" stop-color="#f09040"/><stop offset="0.5" stop-color="#f8b070"/><stop offset="1" stop-color="#f09040"/></linearGradient><radialGradient id="glens" cx="0.4" cy="0.4" r="0.7"><stop offset="0" stop-color="#e8f4fa"/><stop offset="1" stop-color="#78b4d0"/></radialGradient></defs><rect x="4" y="82" width="2" height="2" fill="#a9a9a9"/><rect x="8" y="82" width="2" height="2" fill="#a9a9a9"/><rect x="12" y="82" width="2" height="2" fill="#a9a9a9"/><rect x="16" y="82" width="2" height="2" fill="#a9a9a9"/><rect x="20" y="82" width="2" height="2" fill="#a9a9a9"/><rect x="24" y="82" width="2" height="2" fill="#a9a9a9"/><rect x="28" y="82" width="2" height="2" fill="#a9a9a9"/><clipPath id="clipmon"><rect x="-9.2" y="-6.4" width="18.4" height="10.4"/></clipPath><g transform="translate(17 101)"><rect x="-10.1" y="-7.3" width="20.2" height="12.1" rx="0.8" fill="#e9f6fc" stroke="#2e4258" stroke-width="1.1"/><g clip-path="url(#clipmon)"><circle cx="-0.1" cy="2.1" r="5.4" fill="#3ab4f0"/><circle cx="-6.10" cy="2.10" r="1.25" fill="#3ab4f0"/><circle cx="-5.30" cy="-0.90" r="1.25" fill="#3ab4f0"/><circle cx="-3.10" cy="-3.10" r="1.25" fill="#3ab4f0"/><circle cx="-0.10" cy="-3.90" r="1.25" fill="#3ab4f0"/><circle cx="2.90" cy="-3.10" r="1.25" fill="#3ab4f0"/><circle cx="5.10" cy="-0.90" r="1.25" fill="#3ab4f0"/><circle cx="5.90" cy="2.10" r="1.25" fill="#3ab4f0"/><circle cx="-0.1" cy="2.1" r="2.9" fill="#e9f6fc"/></g><rect x="-10.1" y="4.8" width="20.2" height="3.5" fill="#e2e6ea"/><circle cx="0" cy="6.5" r="0.5" fill="#a8b0b8"/><rect x="-3.7" y="8.3" width="7.6" height="1.8" fill="#d4d8dc"/><ellipse cx="-0.1" cy="10.8" rx="6.7" ry="1.1" fill="#c8ccd0"/></g><g transform="translate(17 132)"><path d="M-10.6 -3.3 Q-10.6 -5.3 -8.6 -5.3 H-5.6 L-4.6 -7.6 H4.4 L5.4 -5.3 H8.7 Q10.7 -5.3 10.7 -3.3 V7.3 Q10.7 9.3 8.7 9.3 H-8.6 Q-10.6 9.3 -10.6 7.3 Z" fill="#727a9a"/><rect x="-8.4" y="-6.3" width="1.4" height="1.4" fill="#3a4258"/><circle cx="-0.1" cy="1.8" r="6" fill="#3e4668"/><circle cx="-0.1" cy="1.8" r="4.1" fill="#5a62a8"/><circle cx="-0.1" cy="1.8" r="2.2" fill="#4048a0"/><circle cx="-1.3" cy="0.6" r="0.9" fill="#9aa2e0"/><circle cx="7.9" cy="-1.3" r="1.2" fill="#e8c040"/></g><g transform="translate(17 162)"><text x="-6.6" y="5.1" font-family="Liberation Serif" font-weight="bold" font-size="13" textLength="13.8" lengthAdjust="spacingAndGlyphs" fill="#100010">1:1</text></g><path d="M17.5 183 V202 M8 192.5 H27" stroke="#000" stroke-width="1"/><rect x="2.5" y="208.5" width="30" height="28" rx="2.5" fill="#cce4f7" stroke="#9acbf0" stroke-width="1"/><path d="M18.5 213 V229 M9 221.5 H28" stroke="#000" stroke-width="1"/><text x="8" y="233.5" font-family="Liberation Sans" font-weight="bold" font-size="8.5" textLength="20" lengthAdjust="spacingAndGlyphs" fill="#d80010">auto</text><g transform="translate(17 252)"><path d="M-11 1 L-2 -8 V9 Z" fill="#c0c0c0" stroke="#404040" stroke-width="1.2"/><path d="M-1 5 Q5 4 8 -1" fill="none" stroke="#404040" stroke-width="1.2"/><path d="M10 -3 L5 -2.5 L8.5 1.5 Z" fill="#404040"/></g><g transform="translate(17 284)"><path d="M-10.7 -7 L-4.5 -11.3 H10.5 V4.5 L4 9.3 H-10.7 Z" fill="#b0b0d8"/><path d="M-10.7 -7 L-4.5 -11.3 V4.5 L-10.7 9.3 Z" fill="#8c8cbc"/><path d="M4 -7 L10.5 -11.3 V4.5 L4 9.3 Z" fill="#dcdcf6"/><path d="M-10.7 9.3 L-4.5 4.5 H10.5 L4 9.3 Z" fill="#9a9ac8"/><path d="M-10.7 -7 L-4.5 -11.3 H10.5 L4 -7 Z" fill="#c4c4e8"/><path d="M5 8 H11 L8 11 Z" fill="#000"/></g><g transform="translate(17 313)"><ellipse cx="0" cy="-1.5" rx="5.5" ry="8.5" fill="none" stroke="#f0a0a0" stroke-width="0.7"/><ellipse cx="-1" cy="1" rx="8.5" ry="5.5" fill="none" stroke="#a0d8a0" stroke-width="0.7"/><circle cx="1.5" cy="0.5" r="7" fill="none" stroke="#a8c4ec" stroke-width="0.7"/><path d="M0.2 -5.5 V5.8 M-5.5 0.1 H5.8" stroke="#000" stroke-width="1.6"/><path d="M0.2 -7.8 L-2.2 -4.4 H2.6 Z M0.2 8 L-2.2 4.6 H2.6 Z M-7.6 0.1 L-4.2 -2.3 V2.5 Z M8 0.1 L4.6 -2.3 V2.5 Z" fill="#000"/><path d="M5 8 H10.6 L7.8 10.8 Z" fill="#000"/></g><g transform="translate(17 343)"><circle cx="-2.7" cy="-2" r="6.9" fill="#bfe9f2" stroke="#3e5a6c" stroke-width="2"/><circle cx="-4.5" cy="-4.2" r="1.6" fill="#eafafc"/><path d="M2.8 3.4 L9.2 9.2" stroke="#3a5468" stroke-width="3.4" stroke-linecap="round"/></g><g transform="translate(17 373)"><path d="M-9.6 -4.6 L-4.8 -8.4 L9.7 -8.4 L4.9 -4.6 Z" fill="url(#gor2)"/><path d="M-9.6 -4.6 L4.9 -4.6 L4.9 8.4 L-9.6 8.4 Z M-4.8 -8.4 L9.7 -8.4 L9.7 4.6 L-4.8 4.6 Z M-9.6 -4.6 L-4.8 -8.4 M4.9 -4.6 L9.7 -8.4 M4.9 8.4 L9.7 4.6 M-9.6 8.4 L-4.8 4.6" fill="none" stroke="#1a1a1a" stroke-width="0.9"/></g><g transform="translate(17 403)"><path d="M-9.6 -4.6 L4.9 -4.6 L4.9 8.4 L-9.6 8.4 Z" fill="url(#gor2)"/><path d="M-9.6 -4.6 L4.9 -4.6 L4.9 8.4 L-9.6 8.4 Z M-4.8 -8.4 L9.7 -8.4 L9.7 4.6 L-4.8 4.6 Z M-9.6 -4.6 L-4.8 -8.4 M4.9 -4.6 L9.7 -8.4 M4.9 8.4 L9.7 4.6 M-9.6 8.4 L-4.8 4.6" fill="none" stroke="#1a1a1a" stroke-width="0.9"/></g><g transform="translate(17 433)"><path d="M-9.6 -4.6 L-4.8 -8.4 L-4.8 4.6 L-9.6 8.4 Z" fill="url(#gor2)"/><path d="M-9.6 -4.6 L4.9 -4.6 L4.9 8.4 L-9.6 8.4 Z M-4.8 -8.4 L9.7 -8.4 L9.7 4.6 L-4.8 4.6 Z M-9.6 -4.6 L-4.8 -8.4 M4.9 -4.6 L9.7 -8.4 M4.9 8.4 L9.7 4.6 M-9.6 8.4 L-4.8 4.6" fill="none" stroke="#1a1a1a" stroke-width="0.9"/></g><g transform="translate(17 463)"><path d="M-4.8 -8.4 L9.7 -8.4 L9.7 4.6 L-4.8 4.6 Z" fill="url(#gor2)"/><path d="M-9.6 -4.6 L4.9 -4.6 L4.9 8.4 L-9.6 8.4 Z M-4.8 -8.4 L9.7 -8.4 L9.7 4.6 L-4.8 4.6 Z M-9.6 -4.6 L-4.8 -8.4 M4.9 -4.6 L9.7 -8.4 M4.9 8.4 L9.7 4.6 M-9.6 8.4 L-4.8 4.6" fill="none" stroke="#1a1a1a" stroke-width="0.9"/></g><g transform="translate(17 493)"><path d="M4.9 -4.6 L9.7 -8.4 L9.7 4.6 L4.9 8.4 Z" fill="url(#gor2)"/><path d="M-9.6 -4.6 L4.9 -4.6 L4.9 8.4 L-9.6 8.4 Z M-4.8 -8.4 L9.7 -8.4 L9.7 4.6 L-4.8 4.6 Z M-9.6 -4.6 L-4.8 -8.4 M4.9 -4.6 L9.7 -8.4 M4.9 8.4 L9.7 4.6 M-9.6 8.4 L-4.8 4.6" fill="none" stroke="#1a1a1a" stroke-width="0.9"/></g><g transform="translate(17 523)"><path d="M-9.6 8.4 L-4.8 4.6 L9.7 4.6 L4.9 8.4 Z" fill="url(#gor2)"/><path d="M-9.6 -4.6 L4.9 -4.6 L4.9 8.4 L-9.6 8.4 Z M-4.8 -8.4 L9.7 -8.4 L9.7 4.6 L-4.8 4.6 Z M-9.6 -4.6 L-4.8 -8.4 M4.9 -4.6 L9.7 -8.4 M4.9 8.4 L9.7 4.6 M-9.6 8.4 L-4.8 4.6" fill="none" stroke="#1a1a1a" stroke-width="0.9"/></g><g transform="translate(17 553)"><path d="M0 -11.6 L11 -7 L11 6 L0 11.7 L-11 6 L-11 -7 Z" fill="#ec8a40" stroke="#c8702c" stroke-width="0.5"/><path d="M0 0 L11 -7 M0 0 L-11 -7 M0 0 V11.7" stroke="#b8601c" stroke-width="0.6"/><path d="M0 -11.6 L11 -7 L0 0 L-11 -7 Z" fill="#f0924a"/><path d="M0 0 L11 -7 L11 6 L0 11.7 Z" fill="#e07c30"/><text x="-11.0" y="-3.2" font-family="Liberation Sans" font-weight="bold" font-size="7" textLength="22" lengthAdjust="spacingAndGlyphs" fill="#1a1000">FRONT</text></g><g transform="translate(17 583)"><path d="M0 -11.6 L11 -7 L11 6 L0 11.7 L-11 6 L-11 -7 Z" fill="#ec8a40" stroke="#c8702c" stroke-width="0.5"/><path d="M0 0 L11 -7 M0 0 L-11 -7 M0 0 V11.7" stroke="#b8601c" stroke-width="0.6"/><path d="M0 -11.6 L11 -7 L0 0 L-11 -7 Z" fill="#f0924a"/><path d="M0 0 L11 -7 L11 6 L0 11.7 Z" fill="#e07c30"/><text x="-9.0" y="-3.2" font-family="Liberation Sans" font-weight="bold" font-size="7" textLength="18" lengthAdjust="spacingAndGlyphs" fill="#1a1000">BACK</text></g><g transform="translate(17 613)"><rect x="-11.5" y="-11.5" width="23" height="23" rx="3" fill="#f0f0f4" stroke="#c8c8d0" stroke-width="0.8"/><circle cx="-4.5" cy="0" r="3.4" fill="#4060c8"/><circle cx="4.5" cy="0" r="3.4" fill="#f03890"/></g></svg>
<div class="a" style="left:1857px;top:1059px;width:63px;height:1px;background:#b0b0b0;"></div>
<div class="a" style="left:1857px;top:78px;width:1px;height:981px;background:#fafafa;"></div>
<svg style="left:1857px;top:78px" width="63" height="470" viewBox="1857 78 63 470"><defs><linearGradient id="gshield" x1="0" y1="0" x2="1" y2="1"><stop offset="0" stop-color="#d8d8d8"/><stop offset="1" stop-color="#888"/></linearGradient></defs><rect x="1861" y="82" width="2" height="2" fill="#a9a9a9"/><rect x="1865" y="82" width="2" height="2" fill="#a9a9a9"/><rect x="1869" y="82" width="2" height="2" fill="#a9a9a9"/><rect x="1873" y="82" width="2" height="2" fill="#a9a9a9"/><rect x="1877" y="82" width="2" height="2" fill="#a9a9a9"/><rect x="1881" y="82" width="2" height="2" fill="#a9a9a9"/><rect x="1885" y="82" width="2" height="2" fill="#a9a9a9"/><rect x="1889" y="82" width="2" height="2" fill="#a9a9a9"/><rect x="1893" y="82" width="2" height="2" fill="#a9a9a9"/><rect x="1897" y="82" width="2" height="2" fill="#a9a9a9"/><rect x="1901" y="82" width="2" height="2" fill="#a9a9a9"/><rect x="1905" y="82" width="2" height="2" fill="#a9a9a9"/><rect x="1909" y="82" width="2" height="2" fill="#a9a9a9"/><rect x="1913" y="82" width="2" height="2" fill="#a9a9a9"/><rect x="1861" y="184" width="2" height="2" fill="#a9a9a9"/><rect x="1865" y="184" width="2" height="2" fill="#a9a9a9"/><rect x="1869" y="184" width="2" height="2" fill="#a9a9a9"/><rect x="1873" y="184" width="2" height="2" fill="#a9a9a9"/><rect x="1877" y="184" width="2" height="2" fill="#a9a9a9"/><rect x="1881" y="184" width="2" height="2" fill="#a9a9a9"/><rect x="1885" y="184" width="2" height="2" fill="#a9a9a9"/><rect x="1889" y="184" width="2" height="2" fill="#a9a9a9"/><rect x="1893" y="184" width="2" height="2" fill="#a9a9a9"/><rect x="1897" y="184" width="2" height="2" fill="#a9a9a9"/><rect x="1901" y="184" width="2" height="2" fill="#a9a9a9"/><rect x="1905" y="184" width="2" height="2" fill="#a9a9a9"/><rect x="1909" y="184" width="2" height="2" fill="#a9a9a9"/><rect x="1913" y="184" width="2" height="2" fill="#a9a9a9"/><rect x="1858" y="179" width="62" height="1" fill="#c4c4c4"/><rect x="1858" y="180" width="62" height="1" fill="#fbfbfb"/><g transform="translate(1888 103)"><circle r="10.5" fill="#b0b0b0" stroke="#707070" stroke-width="2.2"/><path d="M-7 7 L7 -7" stroke="#707070" stroke-width="3.4"/></g><g transform="translate(1888 133)"><rect x="-10.5" y="-10.5" width="21" height="21" fill="#8c8c8c"/><path d="M-5 3 Q-6 -4 0 -7 Q6 -9 8 -3 Q9 3 4 6 Z" fill="#b0b0b0"/><path d="M-1 -4 Q3 -6 5 -2 Q5 2 1 3 Q-2 1 -1 -4 Z" fill="#7c7c7c"/><text x="-10" y="9.5" font-family="Liberation Mono" font-weight="bold" font-size="7.5" textLength="15" lengthAdjust="spacingAndGlyphs" fill="#fff">EDL</text></g><g transform="translate(1888 163)"><rect x="-10.5" y="-10.5" width="21" height="21" fill="#8c8c8c"/><path d="M-5 3 Q-6 -4 0 -7 Q6 -9 8 -3 Q9 3 4 6 Z" fill="#b0b0b0"/><path d="M-1 -4 Q3 -6 5 -2 Q5 2 1 3 Q-2 1 -1 -4 Z" fill="#7c7c7c"/><text x="-10" y="9.5" font-family="Liberation Mono" font-weight="bold" font-size="7.5" textLength="20" lengthAdjust="spacingAndGlyphs" fill="#fff">SSAO</text></g><g transform="translate(1888 206)"><rect x="-10.5" y="-4" width="22" height="14" fill="#b8b8b8" stroke="#909090" stroke-width="0.8"/><rect x="-8" y="-1.5" width="17" height="9" fill="#d4d4d4"/><path d="M-11 -7 L11 -11 L11.5 -7.5 L-10.5 -3.5 Z" fill="#707070"/><path d="M-7 -7.8 L-5 -4.5 M-2 -8.7 L0 -5.4 M3 -9.6 L5 -6.3 M8 -10.4 L10 -7.2" stroke="#e0e0e0" stroke-width="1.6"/></g><g transform="translate(1888 236)"><path d="M0 -11 V3" stroke="#b8b8b8" stroke-width="2"/><path d="M-4 3 H4 L5.5 11 H-5 Z" fill="#c8c8c8" stroke="#b0b0b0" stroke-width="0.6"/></g><g transform="translate(1888 265)"><rect x="-11.5" y="-11.5" width="23" height="23" rx="3.5" fill="#e4e6ea" stroke="#3a4252" stroke-width="1.5"/><circle r="9.8" fill="#fff" stroke="#3a4252" stroke-width="1.7"/><path d="M-4 -6 V6 M0 -8 V8 M4 -6 V6" stroke="#d0d0d0" stroke-width="0.6"/><path d="M6 -6 L1.5 1.5 L-1.5 -1.5 Z" fill="#e03030"/><path d="M-6 6 L1.5 1.5 L-1.5 -1.5 Z" fill="#303848"/></g><g transform="translate(1888 295)"><path d="M0 -10 Q5 -7 9 -7.5 Q10 3 0 10 Q-10 3 -9 -7.5 Q-5 -7 0 -10 Z" fill="#d4d4d4" stroke="#b0b0b0" stroke-width="0.8"/><path d="M0 -6.5 Q3 -4.5 6 -4.8 Q6.5 2 0 6.5 Q-6.5 2 -6 -4.8 Q-3 -4.5 0 -6.5 Z" fill="url(#gshield)"/></g><g transform="translate(1888 347)"><rect x="-6.5" y="-13" width="12.5" height="22" fill="#f8f8f8"/><path d="M-4.5 -10.5 H4" stroke="#505050" stroke-width="1"/><path d="M5.5 -10.5 L2.5 -12.5 V-8.5 Z" fill="#505050"/><text x="-6.2" y="8" font-family="Liberation Sans" font-size="17.5" fill="#646464">N</text></g><g transform="translate(1888 375)"><rect x="-10.5" y="-10.5" width="21" height="21" fill="#fafafa"/><path d="M-7 -3 L-2 -8 L6 -7 L9 -1 L5 5 L-4 5 Z" fill="#c8c8c8" stroke="#b0b0b0" stroke-width="0.6"/><path d="M-7 -3 L0 -2 L9 -1 M0 -2 L-2 -8 M0 -2 L5 5" stroke="#e0e0e0" stroke-width="0.6" fill="none"/><text x="-10" y="9.5" font-family="Liberation Sans" font-weight="bold" font-size="6.8" textLength="14" lengthAdjust="spacingAndGlyphs" fill="#303030">HPR</text></g><g transform="translate(1888 404)"><text x="-11.5" y="-4.5" font-family="Liberation Sans" font-weight="bold" font-size="7.5" textLength="23" lengthAdjust="spacingAndGlyphs" fill="#b0b0b0">M3C2</text><path d="M-9 2 L7 -2 Q11 1 9 5 L-7 9 Q-11 6 -9 2 Z" fill="none" stroke="#a0a0a0" stroke-width="0.8"/><circle cx="-10" cy="0" r="0.9" fill="#606060"/><circle cx="-8" cy="5" r="0.9" fill="#606060"/><circle cx="-6" cy="10" r="0.9" fill="#606060"/><circle cx="-3" cy="3" r="0.9" fill="#606060"/><circle cx="0" cy="7" r="0.9" fill="#606060"/><circle cx="3" cy="1" r="0.9" fill="#606060"/><circle cx="5" cy="5" r="0.9" fill="#606060"/><circle cx="8" cy="-2" r="0.9" fill="#606060"/><circle cx="10" cy="3" r="0.9" fill="#606060"/><circle cx="9" cy="8" r="0.9" fill="#606060"/><circle cx="-1" cy="-1" r="0.9" fill="#606060"/><circle cx="-5" cy="6" r="0.9" fill="#606060"/></g><g transform="translate(1888 434)"><rect x="-10.5" y="-10.5" width="21" height="21" fill="#404040"/><path d="M-10 -4 Q-4 -10 2 -8 Q8 -10 10 -5 M-10 0 Q-3 -7 3 -3 Q8 -5 10 0 M-8 2 Q-2 -4 4 1" fill="none" stroke="#b0b0b0" stroke-width="1.2"/><text x="-9.5" y="9.5" font-family="Liberation Mono" font-weight="bold" font-size="8.5" textLength="19" lengthAdjust="spacingAndGlyphs" fill="#fff">PCV</text></g><g transform="translate(1888 464)"><rect x="-10.5" y="-10.5" width="21" height="21" fill="#f6f6f6"/><path d="M0 -9.5 L9.5 -3 L6 8 L-6 8 L-9.5 -3 Z" fill="#a4a4a4" stroke="#909090" stroke-width="0.6"/><path d="M0 -5.5 L5.5 -1.5 L3.5 4.5 L-3.5 4.5 L-5.5 -1.5 Z" fill="#989898" stroke="#b0b0b0" stroke-width="0.5"/></g><g transform="translate(1888 494)"><rect x="-10.5" y="-10.5" width="21" height="21" fill="#f6f6f6"/><circle cx="0" cy="-4" r="5.5" fill="#b8b8b8"/><path d="M-9 2 L-3 -4 L5 0 L9 4 L9 6 H-9 Z" fill="#c4c4c4"/><text x="-9" y="9.5" font-family="Liberation Sans" font-weight="bold" font-size="9.5" textLength="18" lengthAdjust="spacingAndGlyphs" fill="#4a4a4a">RSD</text></g><g transform="translate(1888 524)"><ellipse rx="11.5" ry="6" fill="none" stroke="#e04868" stroke-width="1.1"/><circle cx="0" cy="-6" r="1" fill="#f0a0b0"/><circle cx="0" cy="6" r="1" fill="#f0a0b0"/><circle cx="-11.5" cy="0" r="1" fill="#f0a0b0"/><circle cx="11.5" cy="0" r="1" fill="#f0a0b0"/></g></svg><div class="t" style="left:1865px;top:314.4px;font-size:11px;color:#707070;font-weight:normal;letter-spacing:-0.450px;">CSF Filter</div>
<div class="a" style="left:266px;top:78px;width:1px;height:841px;background:#e8f4fb;"></div>
<div class="a" style="left:35px;top:79px;width:228px;height:19px;background:#d9d9d9;border:1px solid #c2c2c2"></div>
<div class="t" style="left:40px;top:83.9px;font-size:11.5px;color:#000;font-weight:normal;letter-spacing:-0.741px;">DB Tree</div>
<svg style="left:250px;top:85px" width="9" height="9" viewBox="0 0 9 9"><path d="M2.5 2.5 V0.75 H8.25 V5.5 H6.5" fill="none" stroke="#000" stroke-width="1.5"/><rect x="0.6" y="3.4" width="5.6" height="4.8" fill="#fff" stroke="#000" stroke-width="1.2"/><path d="M0.6 3.6 H6.2" stroke="#000" stroke-width="1.6"/></svg>
<div class="a" style="left:44px;top:109px;width:210px;height:272px;background:#fff;border:1px solid #828790"></div>
<div class="a" style="left:85px;top:231px;width:168px;height:19px;background:#d9d9d9;"></div>
<div class="a" style="left:54px;top:131px;width:1px;height:19px;background:#d9d2cf;"></div>
<div class="a" style="left:54px;top:171px;width:1px;height:19px;background:#d9d2cf;"></div>
<svg style="left:48px;top:115.5px" width="14" height="10" viewBox="0 0 14 10"><path d="M1 1 H13 L7 7.5 Z" fill="#6b4a44"/></svg>
<svg style="left:68.0px;top:114.0px" width="13" height="13" viewBox="0 0 13 13"><rect x="0" y="0" width="13" height="13" rx="2.5" fill="#005fb8"/><path d="M3.2 6.6 L5.5 8.9 L9.9 4.3" fill="none" stroke="#fff" stroke-width="1.2" stroke-linecap="round" stroke-linejoin="round"/></svg>
<svg style="left:86.5px;top:112.5px" width="16" height="16" viewBox="0 0 16 16"><defs><linearGradient id="fg" x1="0" y1="0" x2="0" y2="1"><stop offset="0" stop-color="#f3d36b"/><stop offset="1" stop-color="#c9951c"/></linearGradient></defs><path d="M1.5 3.5 Q1.5 1.8 3.5 1.8 L9 2.2 Q11 2.3 11 4 L11 10.5 L1.5 9.5 Z" fill="#d9a92c"/><path d="M3 5.2 Q3 3.8 4.6 4 L13.2 5 Q14.6 5.2 14.6 6.6 L14.6 12.8 Q14.6 14.3 13 14.1 L4.4 12.9 Q3 12.7 3 11.3 Z" fill="url(#fg)"/></svg>
<div class="t" style="left:108.3px;top:114.3px;font-size:12px;color:#000;font-weight:normal;letter-spacing:-0.527px;">model.obj (C:/Users/iMa...</div>
<svg style="left:71px;top:134.5px" width="10" height="12" viewBox="0 0 10 12"><path d="M0.5 0.5 L7.5 6 L0.5 11.5 Z" fill="#6b4a44"/></svg>
<svg style="left:88.0px;top:134.0px" width="13" height="13" viewBox="0 0 13 13"><rect x="0" y="0" width="13" height="13" rx="2.5" fill="#005fb8"/><path d="M3.2 6.6 L5.5 8.9 L9.9 4.3" fill="none" stroke="#fff" stroke-width="1.2" stroke-linecap="round" stroke-linejoin="round"/></svg>
<svg style="left:106.5px;top:132.5px" width="16" height="16" viewBox="0 0 16 16"><path d="M8.3 1 L14.6 5.6 L11.8 13.8 L3.8 13.2 L1.2 5.8 Z" fill="#f08c3c" stroke="#7a3a10" stroke-width="1"/><path d="M7.6 7.6 L8.3 1 M7.6 7.6 L14.6 5.6 M7.6 7.6 L11.8 13.8 M7.6 7.6 L3.8 13.2 M7.6 7.6 L1.2 5.8" stroke="#7a3a10" stroke-width="0.7" fill="none"/></svg>
<div class="t" style="left:129.0px;top:134.3px;font-size:12px;color:#000;font-weight:normal;letter-spacing:-1.508px;">T1</div>
<svg style="left:48px;top:155.5px" width="14" height="10" viewBox="0 0 14 10"><path d="M1 1 H13 L7 7.5 Z" fill="#6b4a44"/></svg>
<svg style="left:68.0px;top:154.0px" width="13" height="13" viewBox="0 0 13 13"><rect x="0" y="0" width="13" height="13" rx="2.5" fill="#005fb8"/><path d="M3.2 6.6 L5.5 8.9 L9.9 4.3" fill="none" stroke="#fff" stroke-width="1.2" stroke-linecap="round" stroke-linejoin="round"/></svg>
<svg style="left:86.5px;top:152.5px" width="16" height="16" viewBox="0 0 16 16"><defs><linearGradient id="fg" x1="0" y1="0" x2="0" y2="1"><stop offset="0" stop-color="#f3d36b"/><stop offset="1" stop-color="#c9951c"/></linearGradient></defs><path d="M1.5 3.5 Q1.5 1.8 3.5 1.8 L9 2.2 Q11 2.3 11 4 L11 10.5 L1.5 9.5 Z" fill="#d9a92c"/><path d="M3 5.2 Q3 3.8 4.6 4 L13.2 5 Q14.6 5.2 14.6 6.6 L14.6 12.8 Q14.6 14.3 13 14.1 L4.4 12.9 Q3 12.7 3 11.3 Z" fill="url(#fg)"/></svg>
<div class="t" style="left:108.3px;top:154.3px;font-size:12px;color:#000;font-weight:normal;letter-spacing:-0.527px;">model.obj (C:/Users/iMa...</div>
<svg style="left:71px;top:174.5px" width="10" height="12" viewBox="0 0 10 12"><path d="M0.5 0.5 L7.5 6 L0.5 11.5 Z" fill="#6b4a44"/></svg>
<svg style="left:88.0px;top:174.0px" width="13" height="13" viewBox="0 0 13 13"><rect x="0" y="0" width="13" height="13" rx="2.5" fill="#005fb8"/><path d="M3.2 6.6 L5.5 8.9 L9.9 4.3" fill="none" stroke="#fff" stroke-width="1.2" stroke-linecap="round" stroke-linejoin="round"/></svg>
<svg style="left:106.5px;top:172.5px" width="16" height="16" viewBox="0 0 16 16"><path d="M8.3 1 L14.6 5.6 L11.8 13.8 L3.8 13.2 L1.2 5.8 Z" fill="#f08c3c" stroke="#7a3a10" stroke-width="1"/><path d="M7.6 7.6 L8.3 1 M7.6 7.6 L14.6 5.6 M7.6 7.6 L11.8 13.8 M7.6 7.6 L3.8 13.2 M7.6 7.6 L1.2 5.8" stroke="#7a3a10" stroke-width="0.7" fill="none"/></svg>
<div class="t" style="left:129.0px;top:174.3px;font-size:12px;color:#000;font-weight:normal;letter-spacing:-1.008px;">T2</div>
<svg style="left:51px;top:194.5px" width="10" height="12" viewBox="0 0 10 12"><path d="M0.5 0.5 L7.5 6 L0.5 11.5 Z" fill="#6b4a44"/></svg>
<svg style="left:68.0px;top:194.0px" width="13" height="13" viewBox="0 0 13 13"><rect x="0" y="0" width="13" height="13" rx="2.5" fill="#005fb8"/><path d="M3.2 6.6 L5.5 8.9 L9.9 4.3" fill="none" stroke="#fff" stroke-width="1.2" stroke-linecap="round" stroke-linejoin="round"/></svg>
<svg style="left:86.5px;top:192.5px" width="16" height="16" viewBox="0 0 16 16"><defs><linearGradient id="fg" x1="0" y1="0" x2="0" y2="1"><stop offset="0" stop-color="#f3d36b"/><stop offset="1" stop-color="#c9951c"/></linearGradient></defs><path d="M1.5 3.5 Q1.5 1.8 3.5 1.8 L9 2.2 Q11 2.3 11 4 L11 10.5 L1.5 9.5 Z" fill="#d9a92c"/><path d="M3 5.2 Q3 3.8 4.6 4 L13.2 5 Q14.6 5.2 14.6 6.6 L14.6 12.8 Q14.6 14.3 13 14.1 L4.4 12.9 Q3 12.7 3 11.3 Z" fill="url(#fg)"/></svg>
<div class="t" style="left:108.3px;top:194.3px;font-size:12px;color:#000;font-weight:normal;letter-spacing:-0.527px;">model.obj (C:/Users/iMa...</div>
<svg style="left:48px;top:215.5px" width="14" height="10" viewBox="0 0 14 10"><path d="M1 1 H13 L7 7.5 Z" fill="#6b4a44"/></svg>
<svg style="left:68.0px;top:214.0px" width="13" height="13" viewBox="0 0 13 13"><rect x="0" y="0" width="13" height="13" rx="2.5" fill="#005fb8"/><path d="M3.2 6.6 L5.5 8.9 L9.9 4.3" fill="none" stroke="#fff" stroke-width="1.2" stroke-linecap="round" stroke-linejoin="round"/></svg>
<svg style="left:86.5px;top:212.5px" width="16" height="16" viewBox="0 0 16 16"><defs><linearGradient id="fg" x1="0" y1="0" x2="0" y2="1"><stop offset="0" stop-color="#f3d36b"/><stop offset="1" stop-color="#c9951c"/></linearGradient></defs><path d="M1.5 3.5 Q1.5 1.8 3.5 1.8 L9 2.2 Q11 2.3 11 4 L11 10.5 L1.5 9.5 Z" fill="#d9a92c"/><path d="M3 5.2 Q3 3.8 4.6 4 L13.2 5 Q14.6 5.2 14.6 6.6 L14.6 12.8 Q14.6 14.3 13 14.1 L4.4 12.9 Q3 12.7 3 11.3 Z" fill="url(#fg)"/></svg>
<div class="t" style="left:108.3px;top:214.3px;font-size:12px;color:#000;font-weight:normal;letter-spacing:-0.527px;">model.obj (C:/Users/iMa...</div>
<svg style="left:71px;top:234.5px" width="10" height="12" viewBox="0 0 10 12"><path d="M0.5 0.5 L7.5 6 L0.5 11.5 Z" fill="#6b4a44"/></svg>
<svg style="left:88.0px;top:234.0px" width="13" height="13" viewBox="0 0 13 13"><rect x="0" y="0" width="13" height="13" rx="2.5" fill="#005fb8"/><path d="M3.2 6.6 L5.5 8.9 L9.9 4.3" fill="none" stroke="#fff" stroke-width="1.2" stroke-linecap="round" stroke-linejoin="round"/></svg>
<svg style="left:106.5px;top:232.5px" width="16" height="16" viewBox="0 0 16 16"><path d="M8.3 1 L14.6 5.6 L11.8 13.8 L3.8 13.2 L1.2 5.8 Z" fill="#a08c7c" stroke="#4a545c" stroke-width="1"/><path d="M7.6 7.6 L8.3 1 M7.6 7.6 L14.6 5.6 M7.6 7.6 L11.8 13.8 M7.6 7.6 L3.8 13.2 M7.6 7.6 L1.2 5.8" stroke="#4a545c" stroke-width="0.7" fill="none"/></svg>
<div class="t" style="left:129.0px;top:234.3px;font-size:12px;color:#000;font-weight:normal;letter-spacing:0.263px;">model</div>
<div class="a" style="left:35px;top:395px;width:228px;height:19px;background:#d9d9d9;border:1px solid #c2c2c2"></div>
<div class="t" style="left:40px;top:399.9px;font-size:11.5px;color:#000;font-weight:normal;letter-spacing:-0.342px;">Properties</div>
<svg style="left:250px;top:401px" width="9" height="9" viewBox="0 0 9 9"><path d="M2.5 2.5 V0.75 H8.25 V5.5 H6.5" fill="none" stroke="#000" stroke-width="1.5"/><rect x="0.6" y="3.4" width="5.6" height="4.8" fill="#fff" stroke="#000" stroke-width="1.2"/><path d="M0.6 3.6 H6.2" stroke="#000" stroke-width="1.6"/></svg>
<div class="a" style="left:44px;top:425px;width:210px;height:484px;background:#fff;border:1px solid #828790"></div>
<div class="a" style="left:159px;top:426px;width:1px;height:22px;background:#e5e5e5;"></div>
<div class="t" style="left:49px;top:431.8px;font-size:12px;color:#000;font-weight:normal;letter-spacing:-0.045px;">Property</div>
<div class="t" style="left:164px;top:431.8px;font-size:12px;color:#000;font-weight:normal;letter-spacing:-0.196px;">State/Value</div>
<div class="a" style="left:45px;top:449px;width:191px;height:17px;background:#a0a0a0;"></div>
<div class="t" style="left:46px;top:452.1px;font-size:12px;color:#fff;font-weight:normal;letter-spacing:-0.262px;">CC Object</div>
<div class="a" style="left:45px;top:466px;width:191px;height:17px;background:#f5f5f5;"></div>
<div class="a" style="left:45px;top:500px;width:191px;height:17px;background:#f5f5f5;"></div>
<div class="a" style="left:45px;top:534px;width:191px;height:47px;background:#f5f5f5;"></div>
<div class="a" style="left:45px;top:628px;width:191px;height:47px;background:#f5f5f5;"></div>
<div class="a" style="left:45px;top:692px;width:191px;height:24px;background:#f5f5f5;"></div>
<div class="a" style="left:45px;top:733px;width:191px;height:17px;background:#f5f5f5;"></div>
<div class="a" style="left:45px;top:767px;width:191px;height:17px;background:#f5f5f5;"></div>
<div class="t" style="left:48px;top:469.2px;font-size:12px;color:#000;font-weight:normal;letter-spacing:-0.004px;">Name</div>
<div class="t" style="left:163px;top:469.2px;font-size:12px;color:#000;font-weight:normal;letter-spacing:0.263px;">model</div>
<div class="t" style="left:48px;top:486.2px;font-size:12px;color:#000;font-weight:normal;letter-spacing:-0.163px;">Visible</div>
<svg style="left:163.0px;top:485.0px" width="13" height="13" viewBox="0 0 13 13"><rect x="0" y="0" width="13" height="13" rx="2.5" fill="#005fb8"/><path d="M3.2 6.6 L5.5 8.9 L9.9 4.3" fill="none" stroke="#fff" stroke-width="1.2" stroke-linecap="round" stroke-linejoin="round"/></svg>
<div class="t" style="left:48px;top:503.2px;font-size:12px;color:#000;font-weight:normal;letter-spacing:0.047px;">Normals</div>
<svg style="left:163.0px;top:502.0px" width="13" height="13" viewBox="0 0 13 13"><rect x="0" y="0" width="13" height="13" rx="2.5" fill="#005fb8"/><path d="M3.2 6.6 L5.5 8.9 L9.9 4.3" fill="none" stroke="#fff" stroke-width="1.2" stroke-linecap="round" stroke-linejoin="round"/></svg>
<div class="t" style="left:48px;top:520.2px;font-size:12px;color:#000;font-weight:normal;letter-spacing:-0.160px;">Show name (in 3D)</div>
<svg style="left:163.0px;top:519.0px" width="13" height="13" viewBox="0 0 13 13"><rect x="0.5" y="0.5" width="12" height="12" rx="2.5" fill="#fdfdfd" stroke="#6b6b6b" stroke-width="1"/></svg>
<div class="t" style="left:48px;top:552.2px;font-size:12px;color:#000;font-weight:normal;letter-spacing:-0.051px;">Box dimensions</div>
<div class="t" style="left:163px;top:537.2px;font-size:12px;color:#000;font-weight:normal;letter-spacing:-0.606px;">X: 7.34483</div>
<div class="t" style="left:163px;top:552.2px;font-size:12px;color:#000;font-weight:normal;letter-spacing:-0.539px;">Y: 8.23138</div>
<div class="t" style="left:163px;top:567.2px;font-size:12px;color:#000;font-weight:normal;letter-spacing:-0.537px;">Z: 6.08688</div>
<div class="t" style="left:48px;top:599.2px;font-size:12px;color:#000;font-weight:normal;letter-spacing:-0.041px;">Shifted box center</div>
<div class="t" style="left:163px;top:584.2px;font-size:12px;color:#000;font-weight:normal;letter-spacing:-0.606px;">X: 28.3894</div>
<div class="t" style="left:163px;top:599.2px;font-size:12px;color:#000;font-weight:normal;letter-spacing:-0.399px;">Y: -1.66928</div>
<div class="t" style="left:163px;top:614.2px;font-size:12px;color:#000;font-weight:normal;letter-spacing:-0.398px;">Z: -4.60353</div>
<div class="t" style="left:48px;top:646.2px;font-size:12px;color:#000;font-weight:normal;letter-spacing:-0.062px;">Global box center</div>
<div class="t" style="left:163px;top:631.2px;font-size:12px;color:#000;font-weight:normal;letter-spacing:-0.617px;">X: 28.389400</div>
<div class="t" style="left:163px;top:646.2px;font-size:12px;color:#000;font-weight:normal;letter-spacing:-0.422px;">Y: -1.669284</div>
<div class="t" style="left:163px;top:661.2px;font-size:12px;color:#000;font-weight:normal;letter-spacing:-0.421px;">Z: -4.603528</div>
<div class="t" style="left:48px;top:678.2px;font-size:12px;color:#000;font-weight:normal;letter-spacing:-0.004px;">Info</div>
<div class="t" style="left:163px;top:678.2px;font-size:12px;color:#000;font-weight:normal;letter-spacing:-0.266px;">Object ID: 297</div>
<div class="t" style="left:48px;top:699.2px;font-size:12px;color:#000;font-weight:normal;letter-spacing:-0.114px;">Current Display</div>
<div class="a" style="left:160px;top:693px;width:77px;height:22px;background:#fdfdfd;border:1px solid #e0e0e0;border-right:none;border-radius:4px 0 0 4px"></div>
<div class="t" style="left:164px;top:699.2px;font-size:12px;color:#000;font-weight:normal;letter-spacing:-0.498px;">3D View 1</div>
<div class="a" style="left:45px;top:716px;width:191px;height:17px;background:#a0a0a0;"></div>
<div class="t" style="left:46px;top:719.1px;font-size:12px;color:#fff;font-weight:normal;letter-spacing:-0.336px;">Mesh</div>
<div class="t" style="left:48px;top:736.2px;font-size:12px;color:#000;font-weight:normal;letter-spacing:-0.738px;">Faces</div>
<div class="t" style="left:163px;top:736.2px;font-size:12px;color:#000;font-weight:normal;letter-spacing:-0.627px;">364,824</div>
<div class="t" style="left:48px;top:753.2px;font-size:12px;color:#000;font-weight:normal;letter-spacing:0.016px;">Materials/textures</div>
<svg style="left:163.0px;top:752.0px" width="13" height="13" viewBox="0 0 13 13"><rect x="0" y="0" width="13" height="13" rx="2.5" fill="#005fb8"/><path d="M3.2 6.6 L5.5 8.9 L9.9 4.3" fill="none" stroke="#fff" stroke-width="1.2" stroke-linecap="round" stroke-linejoin="round"/></svg>
<div class="t" style="left:48px;top:770.2px;font-size:12px;color:#000;font-weight:normal;letter-spacing:-0.038px;">Wireframe</div>
<svg style="left:163.0px;top:769.0px" width="13" height="13" viewBox="0 0 13 13"><rect x="0.5" y="0.5" width="12" height="12" rx="2.5" fill="#fdfdfd" stroke="#6b6b6b" stroke-width="1"/></svg>
<div class="t" style="left:48px;top:787.2px;font-size:12px;color:#000;font-weight:normal;letter-spacing:0.108px;">Stippling</div>
<svg style="left:163.0px;top:786.0px" width="13" height="13" viewBox="0 0 13 13"><rect x="0.5" y="0.5" width="12" height="12" rx="2.5" fill="#fdfdfd" stroke="#6b6b6b" stroke-width="1"/></svg>
<div class="a" style="left:45px;top:801px;width:191px;height:17px;background:#a0a0a0;"></div>
<div class="t" style="left:46px;top:804.1px;font-size:12px;color:#fff;font-weight:normal;letter-spacing:-0.043px;">Transformation history</div>
<div class="a" style="left:45px;top:841px;width:191px;height:68px;background:#f9f9f9;"></div>
<div class="a" style="left:105px;top:821px;width:80px;height:21px;background:#f3f3f3;border:1px solid #e2e2e2"></div>
<div class="a" style="left:184px;top:821px;width:52px;height:21px;background:#f3f3f3;border:1px solid #e2e2e2;border-right:none"></div>
<div class="a" style="left:45px;top:819px;width:60px;height:24px;background:#fff;border:1px solid #e2e2e2;border-bottom:none;border-left:none"></div>
<div class="t" style="left:57px;top:825.2px;font-size:12px;color:#000;font-weight:normal;letter-spacing:0.221px;">Matrix</div>
<div class="t" style="left:115px;top:826.2px;font-size:12px;color:#000;font-weight:normal;letter-spacing:0.130px;">Axis/Angle</div>
<div class="t" style="left:197px;top:826.2px;font-size:12px;color:#000;font-weight:normal;letter-spacing:-0.115px;">Export</div>
<div class="a" style="left:59px;top:851px;width:177px;height:42px;background:#fff;border:1px solid #e4e4e4;border-right:none;overflow:hidden"><div class="t" style="left:4px;top:4.8px;font-size:12px;color:#000;font-weight:normal;letter-spacing:-0.42px">1.000000 0.000000 0.000000 29.489796</div><div class="t" style="left:4px;top:19.8px;font-size:12px;color:#000;font-weight:normal;letter-spacing:-0.42px">0.000000 -0.100889 0.994898 -7.287010</div><div class="t" style="left:4px;top:34.8px;font-size:12px;color:#000;font-weight:normal;letter-spacing:-0.42px">0.000000 -0.994898 -0.100889 -5.114121</div></div>
<div class="a" style="left:45px;top:893px;width:191px;height:15px;background:#f0f0f0;"></div>
<div class="a" style="left:62px;top:899px;width:95px;height:2px;background:#8a8a8a;border-radius:1px"></div>
<div class="a" style="left:236px;top:426px;width:17px;height:482px;background:#f0f0f0;"></div>
<div class="a" style="left:243px;top:443px;width:3px;height:330px;background:#8a8a8a;border-radius:1.5px"></div>
<div class="a" style="left:35px;top:925px;width:1822px;height:19px;background:#d9d9d9;border:1px solid #c2c2c2"></div>
<div class="t" style="left:40px;top:929.9px;font-size:11.5px;color:#000;font-weight:normal;letter-spacing:-0.743px;">Console</div>
<svg style="left:1828px;top:930px" width="9" height="9" viewBox="0 0 9 9"><path d="M2.5 2.5 V0.75 H8.25 V5.5 H6.5" fill="none" stroke="#000" stroke-width="1.5"/><rect x="0.6" y="3.4" width="5.6" height="4.8" fill="#fff" stroke="#000" stroke-width="1.2"/><path d="M0.6 3.6 H6.2" stroke="#000" stroke-width="1.6"/></svg>
<svg style="left:1843px;top:929px" width="10" height="10" viewBox="0 0 10 10"><path d="M1.3 1.8 L8.2 8.7 M8.2 1.8 L1.3 8.7" stroke="#000" stroke-width="1.7"/></svg>
<div class="a" style="left:44px;top:954px;width:1804px;height:97px;background:#fff;border:1px solid #828790"></div>
<div class="a" style="left:45px;top:955px;width:1784px;height:17px;background:#f5f5f5;"></div>
<div class="a" style="left:1829px;top:955px;width:18px;height:95px;background:#f0f0f0;"></div>
<div class="a" style="left:1837px;top:1013px;width:2px;height:20px;background:#8a8a8a;border-radius:1px"></div>
<div class="t" style="left:49px;top:958.8px;font-size:12px;color:#000;font-weight:normal;letter-spacing:-0.017px;">[13:10:42] [GraphicalTransformationTool] Applied transformation:</div>
<div class="t" style="left:49px;top:975.8px;font-size:12px;color:#000;font-weight:normal;letter-spacing:-0.588px;">[13:10:42] 1.000000000000 0.000000000000 0.000000000000 29.489795684814</div>
<div class="t" style="left:49px;top:990.8px;font-size:12px;color:#000;font-weight:normal;letter-spacing:-0.580px;">0.000000000000 -0.100889191031 0.994897663593 -7.287009716034</div>
<div class="t" style="left:49px;top:1005.8px;font-size:12px;color:#000;font-weight:normal;letter-spacing:-0.540px;">0.000000000000 -0.994897663593 -0.100889191031 -5.114121437073</div>
<div class="t" style="left:49px;top:1020.8px;font-size:12px;color:#000;font-weight:normal;letter-spacing:-0.634px;">0.000000000000 0.000000000000 0.000000000000 1.000000000000</div>
<div class="a" style="left:0px;top:1077px;width:1920px;height:1px;background:#fbfbfb;"></div>
<div class="a" style="left:0px;top:1078px;width:1920px;height:2px;background:#2a2a2a;"></div><svg style="left:267px;top:78px;overflow:hidden" width="1590" height="841" viewBox="267 78 1590 841"><defs>
<linearGradient id="gbg" x1="0" y1="0" x2="0" y2="1"><stop offset="0" stop-color="#0a6697"/><stop offset="1" stop-color="#000"/></linearGradient>
<linearGradient id="gcamper" x1="0" y1="0" x2="1" y2="0.3"><stop offset="0" stop-color="#c2c0b8"/><stop offset="1" stop-color="#a6a49c"/></linearGradient>
<pattern id="pbrown" width="5" height="5" patternUnits="userSpaceOnUse"><rect width="5" height="5" fill="#6a2c16"/><circle cx="1.5" cy="1.5" r="0.9" fill="#94441e"/><circle cx="3.8" cy="3.6" r="0.8" fill="#4a1c0c"/></pattern>
<pattern id="psiding" width="8" height="3.2" patternUnits="userSpaceOnUse" patternTransform="rotate(-4)"><rect x="0" y="0" width="8" height="1.2" fill="#5e5c56" opacity="0.55"/></pattern>
<linearGradient id="gside" x1="0" y1="0" x2="0.15" y2="1"><stop offset="0" stop-color="#969695"/><stop offset="0.6" stop-color="#8a8a89"/><stop offset="1" stop-color="#78787a"/></linearGradient>
<linearGradient id="gfront" x1="0" y1="0" x2="0.3" y2="1"><stop offset="0" stop-color="#7a7874"/><stop offset="0.5" stop-color="#6e6e6d"/><stop offset="1" stop-color="#5c6066"/></linearGradient>
<linearGradient id="gfar" x1="0" y1="0" x2="0" y2="1"><stop offset="0" stop-color="#9c9c9a"/><stop offset="1" stop-color="#7e7e7c"/></linearGradient>
<linearGradient id="gwind" x1="0" y1="0" x2="1" y2="1"><stop offset="0" stop-color="#2e3a36"/><stop offset="0.5" stop-color="#46544c"/><stop offset="1" stop-color="#30382c"/></linearGradient>
<linearGradient id="ghood" x1="0" y1="0" x2="1" y2="1"><stop offset="0" stop-color="#8e8430"/><stop offset="0.5" stop-color="#c2ae44"/><stop offset="1" stop-color="#caa01c"/></linearGradient>
<linearGradient id="gdoor" x1="0" y1="0" x2="0" y2="1"><stop offset="0" stop-color="#c89a14"/><stop offset="0.5" stop-color="#dca616"/><stop offset="1" stop-color="#c08c10"/></linearGradient>
<linearGradient id="gbump" x1="0" y1="0" x2="0" y2="1"><stop offset="0" stop-color="#7c7c7a"/><stop offset="1" stop-color="#b2b2b0"/></linearGradient>
<linearGradient id="gground" x1="0" y1="0" x2="0" y2="1"><stop offset="0" stop-color="#3e3b37"/><stop offset="1" stop-color="#2a2723"/></linearGradient>
<linearGradient id="gground4" x1="0" y1="0" x2="0" y2="1"><stop offset="0" stop-color="#4a453e"/><stop offset="1" stop-color="#332e28"/></linearGradient>
<linearGradient id="gdebA" x1="0" y1="0" x2="1" y2="0.7"><stop offset="0" stop-color="#22364a"/><stop offset="0.5" stop-color="#464e4c"/><stop offset="1" stop-color="#6e7268"/></linearGradient>
<linearGradient id="gdebA2" x1="0" y1="0" x2="1" y2="0.5"><stop offset="0" stop-color="#4a524c"/><stop offset="0.4" stop-color="#5a6058"/><stop offset="0.7" stop-color="#59625f"/><stop offset="1" stop-color="#465460"/></linearGradient>
<linearGradient id="gdebB" x1="0" y1="0" x2="1" y2="0.45"><stop offset="0" stop-color="#1e1e0c"/><stop offset="0.3" stop-color="#4e5238"/><stop offset="0.7" stop-color="#3a3e2e"/><stop offset="1" stop-color="#20261c"/></linearGradient>
<linearGradient id="gblob" x1="0" y1="0" x2="0.6" y2="1"><stop offset="0" stop-color="#5e6a68"/><stop offset="1" stop-color="#3c4644"/></linearGradient>
<linearGradient id="grear" x1="0" y1="0" x2="0" y2="1"><stop offset="0" stop-color="#c8c8c6"/><stop offset="1" stop-color="#6a6a6a"/></linearGradient>
<clipPath id="clipS"><polygon points="0,0 187,0 195.5,111.7 0,116"/></clipPath>
<filter id="mottle" x="-2%" y="-2%" width="104%" height="104%" color-interpolation-filters="sRGB">
<feTurbulence type="fractalNoise" baseFrequency="0.16 0.2" numOctaves="3" seed="7" result="n"/>
<feColorMatrix in="n" type="matrix" values="0.34 0.2 0 0 0.70  0.34 0.2 0 0 0.70  0.34 0.2 0 0 0.71  0 0 0 0 1" result="g"/>
<feBlend in="SourceGraphic" in2="g" mode="multiply" result="b"/>
<feComposite in="b" in2="SourceGraphic" operator="in"/>
</filter>
<clipPath id="clipC3"><polygon points="489,292 520,277 590,265 590,400 470,400 468,340"/></clipPath>
<clipPath id="clip4"><polygon points="0,0 137.5,0 142,69 143,94 95,108 62,113 0,117"/></clipPath>
<g id="tbox"><polygon points="596,277 618,274 645,270 660,273 690,268 720,266 750,263 785,261 787.5,308 683,319" fill="url(#gfar)" /><path d="M640 308 q-10 -22 8 -26 q6 -12 20 -6 q10 8 2 20 q14 -22 30 -14 q12 8 2 24 q10 -24 28 -20 q14 6 4 24 q8 -20 24 -18 q12 4 6 18 q6 -12 18 -10" fill="none" stroke="#1e1e1c" stroke-width="5" stroke-linecap="round" stroke-linejoin="round"/><path d="M700 280 q10 -10 20 -2 q8 -10 18 -2 M738 286 l12 -10 l4 12 l10 -10 l6 10" fill="none" stroke="#242422" stroke-width="2.6" stroke-linecap="round"/><polygon points="600,280 640,273 660,276 700,270 702,277 650,285 626,292" fill="#3a2418" opacity="0.6"/><path d="M640 271 L660 273.5 L690 268.5 L720 266.5 L750 263.5 L785 261.5" fill="none" stroke="#c9a21a" stroke-width="2.4"/><polygon points="785,261 868.75,303.5 787.5,309" fill="#b4b4b2" /><path d="M792 278 l8 14 l6 -16 l8 20 l8 -14 l10 16 M800 296 q10 -12 20 0 M824 288 q8 -4 12 8 M794 290 l30 8" fill="none" stroke="#242424" stroke-width="1.6"/><path d="M785 261 V304" stroke="#e0e0de" stroke-width="2"/><path d="M600 281 L683 319" stroke="#22140c" stroke-width="7"/><polygon points="681,316 868,301 864,412 668,432" fill="url(#gside)" /><g transform="matrix(1 -0.0802 -0.112 1 681 316)"><g clip-path="url(#clipS)"><path d="M14 22 q6 -10 12 -2 q-8 6 -2 10 q10 -2 12 -12 q4 10 14 6 M12 34 h46 M30 18 v22" fill="none" stroke="#1c1c1c" stroke-width="2" transform="scale(1.0 1.0)"/><path d="M78 38 l6 -14 l3 14 m4 -18 v18 m5 -10 v10 m5 -22 v22 m-5 -12 q8 -4 8 6" fill="none" stroke="#1c1c1c" stroke-width="2.2" transform="scale(1.0 1.0)"/><path d="M142 22 q8 -12 14 -2 q6 -10 10 0 q6 -8 10 2 q4 6 -4 8 q-16 4 -30 -8 Z" fill="none" stroke="#b8442c" stroke-width="2.4" transform="scale(1.0 1.0)"/><ellipse cx="112.0" cy="24.0" rx="5.0" ry="2" fill="none" stroke="#1c1c1c" stroke-width="1.6"/><text x="10.0" y="112.0" font-family="Liberation Sans" font-weight="bold" font-size="44.0" textLength="162.0" lengthAdjust="spacingAndGlyphs" fill="#0e0e0e" stroke="#0e0e0e" stroke-width="9" stroke-linejoin="round">SBR3S</text><text x="7.0" y="109.0" font-family="Liberation Sans" font-weight="bold" font-size="44.0" textLength="162.0" lengthAdjust="spacingAndGlyphs" fill="#868686" stroke="#868686" stroke-width="2" stroke-linejoin="round">SBR3S</text><text x="17.0" y="76.0" font-family="Liberation Sans" font-weight="bold" font-size="48.0" textLength="140.0" lengthAdjust="spacingAndGlyphs" fill="#101010" stroke="#101010" stroke-width="9" stroke-linejoin="round">SOBW</text><text x="15.0" y="74.0" font-family="Liberation Sans" font-weight="bold" font-size="48.0" textLength="140.0" lengthAdjust="spacingAndGlyphs" fill="#929291" stroke="#929291" stroke-width="2.5" stroke-linejoin="round">SOBW</text><text x="80.0" y="52.0" font-family="Liberation Sans" font-weight="bold" font-size="11.0" fill="#161616">RBV</text><text x="160.0" y="70.0" font-family="Liberation Sans" font-weight="bold" font-size="14.0" fill="none" stroke="#161616" stroke-width="1.4">N4</text></g></g><path d="M682 316.5 L868 301.5" stroke="#c9a21a" stroke-width="3"/><path d="M865 303 L862 412" stroke="#c8c8c6" stroke-width="2.5" opacity="0.7"/><polygon points="596,277 681,316 675,380 669,400 664,432 646,439 638,444 636,390 636,358 620,350 600,338 590,334 582.5,335 586,307.5 590,287.5" fill="url(#gfront)" /><path d="M594 280 L680 320" stroke="#bcb8ac" stroke-width="7" stroke-linecap="round"/><path d="M593 286 L677 326" stroke="#6e6c66" stroke-width="2" opacity="0.6"/><path d="M680 320 L668 430" stroke="#aeaca6" stroke-width="4" opacity="0.85"/><rect x="612" y="291" width="2.4" height="1.4" fill="#c86820"/><rect x="632" y="300" width="2.4" height="1.4" fill="#c86820"/><rect x="652" y="309" width="2.4" height="1.4" fill="#c86820"/><rect x="671" y="318" width="2.4" height="1.4" fill="#c86820"/></g><g id="tcab"><polygon points="497.5,376 522.5,364.5 530,360 562.5,334 575,330 600,327.5 646,355 644,392 640,437 600,440.5 596,428 586,423 572,428 560,425.5 542.5,440 515,432.5 486,415 486,401" fill="#8a7a2c" /><polygon points="562.5,334 575,330 600,327.5 646,355 645,362 610,357.5 602.5,351 572.5,335" fill="#3a3e30" /><path d="M564 334.5 L576 331 L600 328.5 L645 355.5" fill="none" stroke="#c8a01a" stroke-width="2.6"/><polygon points="612,346 630,350 644,357 642,366 622,362 608,356" fill="#c9a21c" /><polygon points="584,336 600,334 614,343 604,349 592,343" fill="#54604e" /><polygon points="530,360 562.5,334 572.5,335 602.5,351 605,370 592.5,390 572.5,385 530,365" fill="url(#gwind)" /><path d="M534 361 L564 337 M540 366 L594 388 M560 352 L590 368 M545 360 L580 376" stroke="#8a9a90" stroke-width="1.2" opacity="0.6" fill="none"/><polygon points="562.5,334 566,334 534,363 530,361" fill="#c8a828" /><polygon points="583,356 598,362 596,372 584,368" fill="#a8b4bc" opacity="0.8"/><polygon points="497.5,375 522.5,364 530,365 572.5,385 592.5,390 585,400 560,406 535,396 497.5,385" fill="url(#ghood)" /><polygon points="497.5,385 535,399 533,420 496,405" fill="#3a3a38" /><path d="M500 389 L533 402 M499 393 L533 406 M499 397 L532.5 410 M498 401 L532.5 414" stroke="#6e6e6a" stroke-width="1"/><polygon points="508,398 521,403 521,407 508,402" fill="#b02020" /><polygon points="535,404 560,407.5 559,419 533,416.5" fill="#2c2c24" /><polygon points="541,407 556,409 555.5,416 540.5,414.5" fill="#6c6a52" /><polygon points="533,417.5 558,420.5 557.5,425.5 532.5,422.5" fill="#e0821a" /><polygon points="485,400 496,405 532.5,421 560,425.5 557.5,435 542.5,441 515,433 485,415" fill="url(#gbump)" /><polygon points="501,420.5 512,425 512,431 501,426.5" fill="#d9b224" /><polygon points="560,406 585,400 592.5,390 605,370 610,357.5 627.5,360 645,355 643.75,390 640,437.5 600,441 596,428 586,423 572,428 560,425" fill="url(#gdoor)" /><polygon points="607.5,370 625,360 640,362.5 638.75,390 617.5,392.5 602.5,390" fill="#4c5248" /><polygon points="612,372 624,364 630,366 622,388 610,388" fill="#7a8278" opacity="0.7"/><polygon points="605,397.5 640,392.5 639,409 605,412.5" fill="#c4c4c0" /><path d="M607 400 L638 395.5 M607 403.5 L638 399 M607 407 L638 402.5 M607 410 L630 407" stroke="#303038" stroke-width="1.5" stroke-dasharray="2 1"/><polygon points="605,415 625,413.5 625,422 605,424.5" fill="#c4c4c0" /><path d="M607 418 L623 416.5 M607 421.5 L620 420.5" stroke="#303038" stroke-width="1.5" stroke-dasharray="2 1"/><ellipse cx="529.5" cy="344" rx="3.4" ry="6.8" fill="#8c9494" transform="rotate(8 529.5 344)"/><ellipse cx="620" cy="390" rx="2.8" ry="6" fill="#a0a6a6"/><ellipse cx="581" cy="440" rx="14" ry="19" fill="#17171c" transform="rotate(12 581 440)"/><ellipse cx="579.5" cy="441" rx="6" ry="8.5" fill="#5a5c60" transform="rotate(12 579.5 441)"/><ellipse cx="579.5" cy="441" rx="2.5" ry="3.6" fill="#2a2a2e" transform="rotate(12 579.5 441)"/><polygon points="482.5,383.5 485.5,420 470,420" fill="#e2561c" /><polygon points="480.6,392 484,392.5 484.6,400 478.4,399.5" fill="#ece8e0" /><polygon points="466,419 488,421 486,425 468,423" fill="#c2401a" /></g><g id="camper"><polygon points="460,382 466,332 474,281 520,277.5 546,275 575,271 580,290 576,326 562.5,334 530,357.5 520,362.5 497.5,375 495,380 480,384" fill="url(#gcamper)" /><polygon points="460,382 466,332 474,281 520,277.5 546,275 575,271 580,290 576,326 562.5,334 530,357.5 520,362.5 497.5,375 495,380 480,384" fill="url(#psiding)" /><polygon points="546,275 575,271 580,290 576,326 562.5,334 540,350" fill="#6e6c66" opacity="0.35"/><path d="M544 276 L534 352" stroke="#d8d6d0" stroke-width="2.5"/><polygon points="494,312.5 532.5,310 530,330 494,331" fill="#c8c6be" /><polygon points="496,314 512,313 511,329 496,329.5" fill="#5c5c50" /><polygon points="514,313 531,312 529,328.5 513,329" fill="#6a6a5c" /><path d="M464 347 L531 343.5" stroke="#2c3468" stroke-width="1.6"/><path d="M464 350.5 L529 347" stroke="#e4e2dc" stroke-width="2.4"/></g></defs><rect x="267" y="78" width="1590" height="841" fill="url(#gbg)"/><polygon points="814,120.4 819,113.3 828.6,111.6 841.5,116.2 857.7,128.4 873.8,139.7 880.3,149.4 893.2,159.1 909.4,167.2 922.3,173.6 927.1,178.5 925.5,184 914.2,186.6 899.7,181.7 883.5,173.6 864.1,164 854.5,155.9 838.3,143 825.4,133.3 817.3,128.4" fill="url(#gdebA)" /><path d="M853 150 Q866 162 884 172 L900 180" fill="none" stroke="#b8b8ac" stroke-width="1.8"/><path d="M876 144 Q879 154 884 162 M886 151 Q890 160 893 168" stroke="#3a3e3a" stroke-width="1.2" fill="none"/><polygon points="872.2,178.5 880.3,174.3 891.6,173.6 906.1,180.1 919,191.4 932,207.5 948.1,212.4 964.2,210.8 977.2,222.1 986.8,231.8 1012.7,226.9 1028.8,238.2 1045,247.9 1064.3,254.4 1083.7,268.9 1109.5,280.2 1141.8,289.9 1161.2,302.8 1167,312.5 1162.8,323.8 1148.3,318.9 1125.7,310.9 1103.1,296.3 1077.3,283.4 1051.4,267.3 1028.8,257.6 1006.2,247.9 986.8,239.8 967.5,236.6 948.1,226.9 928.7,217.2 912.6,207.5 898.1,199.5 886.8,191.4 875.5,184.9" fill="url(#gdebA2)" /><path d="M892 195 L912 206.5 L928 216.5 L948 226.2 L967 235.5" fill="none" stroke="#c0c0b4" stroke-width="1.8"/><path d="M1030 257 L1052 266.5 L1078 282.5 L1104 295.5 L1126 310" fill="none" stroke="#9ea49e" stroke-width="1.4"/><path d="M940 212 L975 226 M1000 231 L1040 250 M1070 262 L1110 285" fill="none" stroke="#5c645e" stroke-width="2" opacity="0.6"/><polygon points="719.8,173.5 731.3,191.3 745.8,207.9 762.5,218.3 783.3,222.5 808.3,230.8 845.8,247.5 879.2,257.9 887.5,278.8 879.2,276.7 845.8,260 825,251.7 804.2,243.3 783.3,235 762.5,228.8 741.7,218.3 720.8,205.8 708.3,195.4 707.3,191.3" fill="url(#gdebB)" /><polygon points="782.3,212.1 808.3,224.6 845.8,241.3 877.1,251.7 879.2,257.9 845.8,247.5 808.3,230.8 783.3,222.5" fill="#2a3026" /><polygon points="879.2,257.9 887.5,255.8 908.3,260 929.2,268.3 950,276.7 979.2,285 981.3,293.3 970.8,318.3 950,305.8 929.2,293.3 908.3,285 887.5,278.8" fill="#0e1a12" /><polygon points="858.3,222.5 866.7,226.7 887.5,237.1 908.3,247.5 925,257.9 939.6,266.3 960.4,272.5 979.2,278.8 991.7,282.9 979.2,285 950,276.7 929.2,268.3 908.3,260 887.5,255.8 877.1,251.7 875,243.3" fill="#687060" /><polygon points="944.8,276.7 953.1,277.7 950,305.8 941.7,303.8" fill="#a4a494" /><polygon points="980.2,282.9 989.6,279.8 997.9,295.4 995.8,305.8 985.4,303.8 979.2,293.3" fill="#c6c0a2" /><polygon points="995.8,305.8 1033.3,324.6 1072.9,337.1 1075,343.3 1054.2,341.3 1033.3,328.8 991.7,310" fill="#040404" /><polygon points="952,292 979,296 975,312 962,310" fill="url(#gbg)" opacity="0"/><polygon points="609,107 650,124 707,149 700,150 650,128" fill="#2c3430" /><path d="M638 95 L783 166" stroke="#26302c" stroke-width="1.3"/><path d="M741 193 L765 203" stroke="#26302c" stroke-width="1"/><path d="M1008.3 293.3 L1070.8 320.4" stroke="#0c1416" stroke-width="1.2" fill="none"/><polygon points="427,381 420,392 420,407 424,421 471,443 512,455.5 552.6,463.7 613.7,465.7 665,469 670,451 647.5,450 640,440 600,445 592,459 578,460 565,461 542,456 520,446 508,432 485,415 485,400 472.5,386 442.5,387.5" fill="url(#gground)" /><polygon points="422,392 428,384 445,388 472,387 483,398 470,402 440,404" fill="#56606a" opacity="0.7"/><g filter="url(#mottle)"><polygon points="427.3,380.2 434.4,355.7 442.6,341.5 452.8,325.2 469,319 491.5,311 505.7,298.7 520,286.5 521,277.3 544.4,274.3 573,272.2 577,278.3 579,290.6 576,329.3 566.9,335.4 560.7,337.4 536.3,355.7 526.1,361.9 520,368 497.6,382.2 493.5,386.3 485.4,382.2 471.1,384.3 440.6,387.3 430.4,386.3" fill="url(#gcamper)" /><polygon points="427.3,380.2 434.4,355.7 442.6,341.5 452.8,325.2 469,319 491.5,311 505.7,298.7 520,286.5 521,277.3 544.4,274.3 573,272.2 577,278.3 579,290.6 576,329.3 566.9,335.4 560.7,337.4 536.3,355.7 526.1,361.9 520,368 497.6,382.2 493.5,386.3 485.4,382.2 471.1,384.3 440.6,387.3 430.4,386.3" fill="url(#psiding)" /><polygon points="544.4,274.3 573,272.2 577,278.3 579,290.6 576,329.3 566.9,335.4 536.3,355.7 528,358" fill="#6e6c66" opacity="0.35"/><path d="M544.4 278 L524 361.8" stroke="#d8d6d0" stroke-width="2.5"/><polygon points="427.3,380.2 434.4,355.7 442.6,341.5 452.8,325.2 469,319 477.2,321.1 481.3,327.2 479.3,349.6 475.2,365.9 469,382.2 440.6,386.3" fill="#c2c0b8" /><polygon points="427.3,380.2 434.4,355.7 442.6,341.5 447,344 440,360 435,383" fill="#8a8882" opacity="0.7"/><polygon points="465,319.5 477,316 477,321 467,323.5" fill="#2c2c28" /><polygon points="495.6,309.9 532.2,309.9 529.2,330.3 493.5,331.3" fill="#c8c6be" /><polygon points="497.5,311.5 512.5,311.5 511,329 495.5,329.6" fill="#5c5c50" /><polygon points="514.5,311.5 530.5,311.5 527.8,328.6 513,329" fill="#6a6a5c" /><path d="M438.5 348 L524 344.5" stroke="#2c3468" stroke-width="1.6"/><path d="M437.5 351.5 L522 348" stroke="#e4e2dc" stroke-width="2.4"/><use href="#tbox"/><use href="#tcab"/></g><polygon points="725,252.7 754.2,251.7 762.5,262.1 772.9,287.1 768.8,288.1 752.1,282.9 731.3,272.5 722.9,260" fill="url(#pbrown)" /><polygon points="793.8,260 804.2,255.8 812.5,263.1 825,268.3 833.3,257.9 845.8,257.9 866.7,268.3 883.3,274.6 885.4,282.9 877.1,293.3 872.9,299.6 862.5,293.3 845.8,285 825,278.8 808.3,270.4" fill="url(#pbrown)" /><polygon points="1075.5,366 1088,385 1111,416 1092,408 1071,395" fill="#84845c" /><polygon points="1129,385 1136,387 1142,394 1134,391" fill="#2a3028" /><polygon points="1176,400 1182,398 1184,409" fill="#7a7a56" /><polygon points="1230,461 1245,463 1262,472 1272,481 1255,474" fill="#8a8a62" /><polygon points="1295,487 1312,489 1326,497 1336,509 1318,500" fill="#8c8c66" /><polygon points="1360,503 1375,502 1388,512 1396,520 1378,512" fill="#84846a" /><path d="M1269 443 L1434 516 M1276 467 L1431 534 M1230 446 L1255 457 M1214 455 L1240 467" stroke="#0c1a24" stroke-width="1.2" fill="none"/><polygon points="1390,450 1405,448 1427,459 1450,455 1473,459 1498,476 1532,511 1531,529 1505,518 1473,505 1444,492 1418,482 1398,466" fill="url(#gblob)" /><path d="M1418 481 L1444 491 L1473 504 L1505 517 L1530 528" fill="none" stroke="#a4a89c" stroke-width="2"/><polygon points="1523,763 1530,752 1542,744 1536,756" fill="#8c8c8c" /><polygon points="1417,799 1422,791 1421,798" fill="#a06050" /><polygon points="648.6,516 654.8,493 670,490 690,512 700,530 760,560 800,565 830,545 870,548 915,552 942,556 942,585 913.3,587 877.9,583.5 853.1,590.5 824.8,581 798.2,583.5 771.7,580 736.3,571 700.8,560.5 674.3,548 653,533.7" fill="url(#gground)" /><polygon points="920.4,560.3 905,566 886.8,579.8 900,582 922.2,583.3" fill="#7e4030" opacity="0.85"/><g filter="url(#mottle)"><use href="#camper" transform="translate(199.5 109.5)"/><use href="#tbox" transform="matrix(1.0097 -0.0021 0.0149 0.9929 184.11 114.97)"/><use href="#tcab" transform="matrix(0.9788 -0.0289 0.0311 1.0371 202.64 112.96)"/></g><polygon points="1014,388 1030,385 1040,398 1046,416 1040,425 1026,414" fill="#3a4238" /><polygon points="826,540 834,536 846,538 852,548 853,580 845,588 826,582 822,560" fill="#c65a2c" /><polygon points="824,550 852,553 852.5,561 823,557" fill="#dcd8d0" /><polygon points="823,566 853,570 853,577 824,573" fill="#dcd8d0" /><polygon points="885.3,652 915.4,632.5 933,623.6 945,625 952,640 955,655 970.3,664.4 986.3,671.5 1004,676.8 1027,682 1040,690 1060,690 1067.7,682 1074.8,685.6 1110.2,683.9 1136.8,685.6 1142,696.3 1124.4,703.3 1136.8,712.2 1119,710.4 1092.5,708.6 1057.1,706.9 1021.7,701.6 995.1,694.5 968.5,683.9 942,671.5 924.3,660.8 901.3,655.5" fill="url(#gground)" /><polygon points="885.3,652 915.4,632.5 933,623.6 942,628 930,645 905,654" fill="#5a5c5c" opacity="0.7"/><g filter="url(#mottle)"><use href="#camper" transform="translate(468.5 228)" clip-path="url(#clipC3)"/><use href="#tbox" transform="matrix(1.0127 -0.0152 -0.0188 0.9345 464.13 263.98)"/><use href="#tcab" transform="matrix(0.9938 0.0139 -0.0459 1.0399 485.29 209.40)"/></g><path d="M1372.5 397.5 L1317 709.5 M987 740 L1317 709.5 L1578 840" stroke="#f6f64a" stroke-width="1.15" fill="none"/><g filter="url(#mottle)"><polygon points="1115.7,755.3 1134.5,747.8 1140,760 1166.4,769.4 1200,775 1202,782.5 1211.4,791.9 1230.2,797.5 1252.7,797.5 1260,790 1279,771.3 1312,770 1375,766 1395,793 1420,805 1410,810 1320,809.5 1279,807.5 1249,810.5 1222.7,806 1185,791.5 1147.6,776 1125,762.5" fill="url(#gground4)" /><polygon points="1115,680 1120,652.5 1137.5,620 1160,610 1185,607.5 1207.5,607.5 1205,627.5 1195,652.5 1175,680 1160,700 1142.5,695 1140,682.5 1115,682.5" fill="url(#gcamper)" /><polygon points="1115,680 1120,652.5 1137.5,620 1160,610 1185,607.5 1207.5,607.5 1205,627.5 1195,652.5 1175,680 1160,700 1142.5,695 1140,682.5 1115,682.5" fill="url(#psiding)" /><polygon points="1183,608 1207.5,607.5 1205,627.5 1195,652.5 1175,680 1163,696" fill="#6e6c66" opacity="0.35"/><path d="M1182 609 L1160 698" stroke="#d8d6d0" stroke-width="2.5"/><polygon points="1133.75,645 1167.5,643.75 1163.75,665 1132.5,666" fill="#c8c6be" /><polygon points="1136,647 1150,646.5 1148,663.5 1135,664" fill="#5c5c50" /><polygon points="1152,646.5 1165.5,646 1162,663 1150,663.5" fill="#6a6a5c" /><path d="M1116 677 L1170 676" stroke="#2c3468" stroke-width="1.5"/><polygon points="1325,632.5 1357.5,610 1375,606 1391,607.5 1385,651 1333.75,653.75 1320,645" fill="url(#gfar)" /><path d="M1330 645 q6 -14 16 -8 q8 -12 16 -2 q10 -8 14 4 M1345 630 q8 -8 14 0 l10 -8" fill="none" stroke="#2a2a28" stroke-width="2.4"/><polygon points="1391,620 1412.5,616 1491,647.5 1487.5,652.5 1470,651 1385,651" fill="#c4c4c2" /><path d="M1396 628 l8 14 l6 -16 l8 18 l8 -12 l10 14 l8 -10 l8 12 M1404 646 q10 -10 20 0 M1430 640 q10 -6 16 6" fill="none" stroke="#2a2a2a" stroke-width="1.2"/><polygon points="1470,651 1491,647.5 1485,755 1465,762.5 1460,745" fill="url(#grear)" /><polygon points="1445,750 1460,754 1460,762 1445,757" fill="#d8a818" /><polygon points="1332.5,653.75 1470,651 1462.5,720 1460,745 1407.5,760 1375,765 1312.5,770 1317.5,720 1326,670" fill="url(#gside)" /><g transform="matrix(1 -0.02 -0.172 1 1332.5 653.75)"><g clip-path="url(#clip4)"><path d="M14 22 q6 -10 12 -2 q-8 6 -2 10 q10 -2 12 -12 q4 10 14 6 M12 34 h46 M30 18 v22" fill="none" stroke="#1c1c1c" stroke-width="2" transform="scale(0.7352941176470589 1.0)"/><path d="M78 38 l6 -14 l3 14 m4 -18 v18 m5 -10 v10 m5 -22 v22 m-5 -12 q8 -4 8 6" fill="none" stroke="#1c1c1c" stroke-width="2.2" transform="scale(0.7352941176470589 1.0)"/><path d="M142 22 q8 -12 14 -2 q6 -10 10 0 q6 -8 10 2 q4 6 -4 8 q-16 4 -30 -8 Z" fill="none" stroke="#b8442c" stroke-width="2.4" transform="scale(0.7352941176470589 1.0)"/><ellipse cx="82.3529411764706" cy="24.0" rx="3.6764705882352944" ry="2" fill="none" stroke="#1c1c1c" stroke-width="1.6"/><text x="7.352941176470589" y="112.0" font-family="Liberation Sans" font-weight="bold" font-size="44.0" textLength="119.11764705882354" lengthAdjust="spacingAndGlyphs" fill="#0e0e0e" stroke="#0e0e0e" stroke-width="9" stroke-linejoin="round">SBR3S</text><text x="5.147058823529412" y="109.0" font-family="Liberation Sans" font-weight="bold" font-size="44.0" textLength="119.11764705882354" lengthAdjust="spacingAndGlyphs" fill="#868686" stroke="#868686" stroke-width="2" stroke-linejoin="round">SBR3S</text><text x="12.5" y="76.0" font-family="Liberation Sans" font-weight="bold" font-size="48.0" textLength="102.94117647058825" lengthAdjust="spacingAndGlyphs" fill="#101010" stroke="#101010" stroke-width="9" stroke-linejoin="round">SOBW</text><text x="11.029411764705884" y="74.0" font-family="Liberation Sans" font-weight="bold" font-size="48.0" textLength="102.94117647058825" lengthAdjust="spacingAndGlyphs" fill="#929291" stroke="#929291" stroke-width="2.5" stroke-linejoin="round">SOBW</text><text x="58.82352941176471" y="52.0" font-family="Liberation Sans" font-weight="bold" font-size="11.0" fill="#161616">RBV</text><text x="117.64705882352942" y="70.0" font-family="Liberation Sans" font-weight="bold" font-size="14.0" fill="none" stroke="#161616" stroke-width="1.4">N4</text></g></g><path d="M1334 654 L1470 651" stroke="#c9a21a" stroke-width="3"/><polygon points="1232.5,616 1240,615 1332.5,653.75 1326,670 1317.5,720 1312.5,770 1290,772.5 1285,762.5 1292.5,690 1275,680 1240,663.75 1220,670 1225,632.5" fill="url(#gfront)" /><path d="M1234 620 L1330 658" stroke="#c2beb2" stroke-width="8" stroke-linecap="round" opacity="0.9"/><path d="M1330 660 L1314 768" stroke="#b4b2ac" stroke-width="4" opacity="0.8"/><rect x="1255" y="627" width="2.4" height="1.4" fill="#c86820"/><rect x="1275" y="635" width="2.4" height="1.4" fill="#c86820"/><rect x="1295" y="643" width="2.4" height="1.4" fill="#c86820"/><rect x="1316" y="652" width="2.4" height="1.4" fill="#c86820"/><polygon points="1148,710.5 1167.5,698 1175,695.5 1200,680.5 1220,670.5 1240,664 1292,690 1285,762 1275,772 1248,772 1243,760 1242.5,731 1220,739.5 1215,757 1210,767 1195,772 1162.5,762 1135.5,745 1134.5,730.5" fill="#8a7a2c" /><polygon points="1220,670 1240,663.75 1275,680 1292.5,690 1275,695 1262.5,690 1217.5,675" fill="#3a3e30" /><path d="M1219 671 L1240 664.5 L1275 680.5 L1292 690.5" fill="none" stroke="#c8a01a" stroke-width="2.6"/><polygon points="1226,676 1250,683 1262,690 1240,686" fill="#c9a21c" /><polygon points="1175,695 1200,680 1217.5,675 1262.5,690 1275,695 1250,725 1240,720 1185,700" fill="url(#gwind)" /><path d="M1180 696 L1216 677 M1190 702 L1248 722 M1210 690 L1255 708" stroke="#8a9a90" stroke-width="1.2" opacity="0.6" fill="none"/><polygon points="1262.5,690 1275,695 1250,725 1244,722" fill="#c8a020" /><polygon points="1147.5,710 1167.5,697.5 1185,700 1240,720 1250,727.5 1235,732.5 1220,740 1182.5,725 1150,715" fill="url(#ghood)" /><polygon points="1150,717.5 1185,730 1195,740 1190,753.5 1152.5,738.5" fill="#3a3a38" /><path d="M1153 722 L1192 737 M1153 726 L1191 741 M1153 730 L1191 745 M1153 734 L1190 749" stroke="#6e6e6a" stroke-width="1"/><polygon points="1163,731 1178,737 1178,741 1163,735" fill="#b02020" /><polygon points="1192.5,737.5 1217.5,740 1216,750 1191,748" fill="#2c2c24" /><polygon points="1190,749 1215,752 1214,758 1189.5,755" fill="#e0821a" /><polygon points="1133.75,730 1150,720 1152.5,738.5 1190,753.5 1215,758.5 1210,767.5 1195,772.5 1162.5,762.5 1135,745" fill="url(#gbump)" /><polygon points="1156,750 1168,754.5 1168,760.5 1156,756" fill="#d9b224" /><polygon points="1242.5,730 1255,725 1275,695 1292.5,690 1285,762.5 1275,772.5 1247.5,772.5 1242.5,760" fill="url(#gdoor)" /><polygon points="1260,717.5 1275,697.5 1287.5,695 1285,725 1260,730" fill="#6c7268" /><polygon points="1256,732 1284,728 1283,742 1256,745" fill="#c4c4c8" /><path d="M1258 735 L1282 731.5 M1258 739 L1282 735.5 M1258 742.5 L1278 740" stroke="#303038" stroke-width="1.3" stroke-dasharray="2 1"/><polygon points="1254,750 1270,748.5 1270,756 1254,758" fill="#c4c4c8" /><polygon points="1220,740 1235,732.5 1242.5,730 1242.5,745 1230,748" fill="#a8a49c" /><ellipse cx="1390" cy="776" rx="11" ry="17" fill="#17171c" transform="rotate(14 1390 776)"/><ellipse cx="1388.5" cy="777" rx="4.5" ry="7" fill="#3a3c40" transform="rotate(14 1388.5 777)"/><polygon points="1312.5,770 1375,765 1380,790 1330,792 1300,785" fill="#14161a" /><polygon points="1280,770 1281,806 1262,806" fill="#d85a24" /><polygon points="1275.5,783 1280.4,783 1280.6,792 1270.6,792" fill="#ece8e0" /></g><path d="M1043.5 429 L1372.5 397.5 L1634 528 L1303 560 Z M987 740 L1248 870 L1578 840 M1043.5 429 L987 740 M1303 560 L1248 870 M1634 528 L1578 840" stroke="#f6f64a" stroke-width="1.15" fill="none"/><path d="M1062.5 489 V508 M1053 498.5 H1072" stroke="#e8eef2" stroke-width="1"/><path d="M1405.5 889 H1786.5 M1405.5 886 V892.5 M1786.5 886 V892.5" stroke="#fff" stroke-width="1.2" fill="none"/><text x="1596" y="908" text-anchor="middle" font-family="Liberation Sans" font-size="12" fill="#fff">7</text><path d="M1823 888 L1826 866" stroke="#28a0f0" stroke-width="2.4" stroke-linecap="round"/><path d="M1823 888 L1840 887" stroke="#20d820" stroke-width="2.4" stroke-linecap="round"/><path d="M1823 888 L1838 896" stroke="#e02020" stroke-width="2.4" stroke-linecap="round"/></svg>
</body></html>
